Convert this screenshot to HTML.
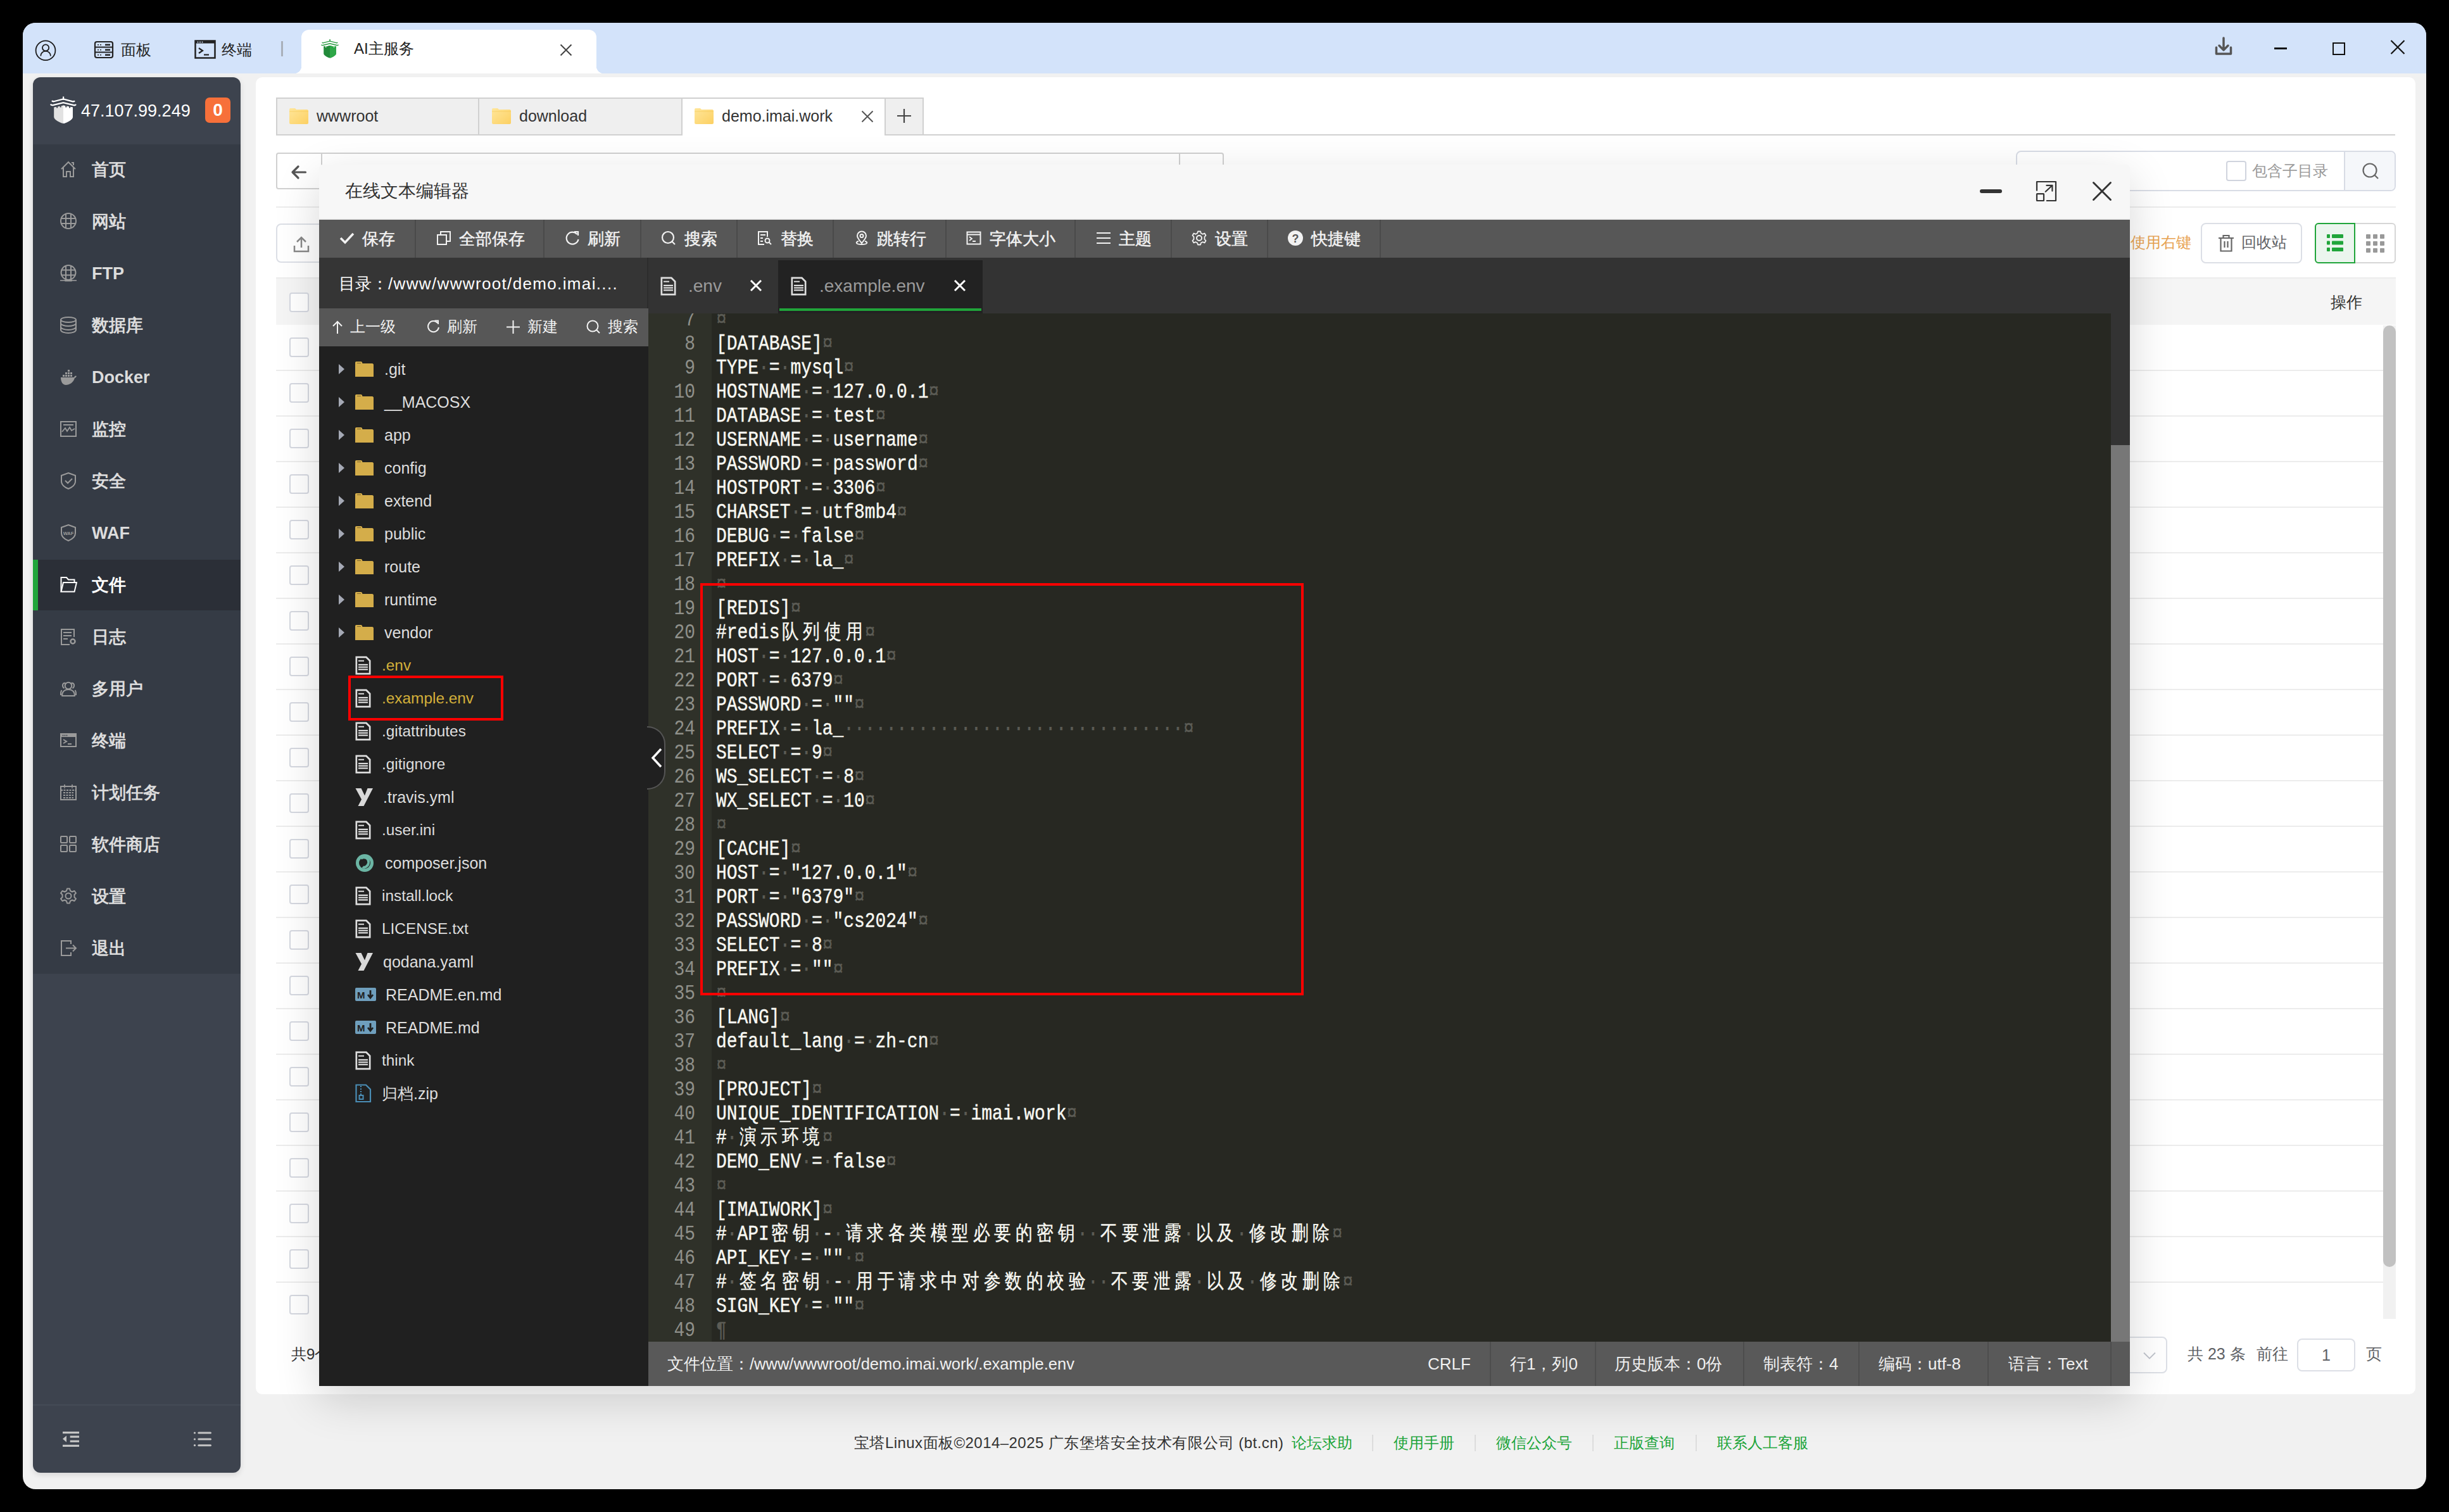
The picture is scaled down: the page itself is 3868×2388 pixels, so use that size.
<!DOCTYPE html>
<html><head><meta charset="utf-8"><title>editor</title>
<style>
html,body{margin:0;padding:0;width:3868px;height:2388px;overflow:hidden;background:#000;}
body{position:relative;font-family:"Liberation Sans",sans-serif;}
div,svg{box-sizing:border-box;}
</style></head><body>
<div style="position:absolute;left:36px;top:36px;width:3796px;height:2316px;background:#f1f1f1;border-radius:20px;overflow:hidden;"></div>
<div style="position:absolute;left:36px;top:36px;width:3796px;height:80px;background:#d3e3fa;border-radius:20px 20px 0 0;"></div>
<div style="position:absolute;left:52px;top:122px;width:328px;height:2204px;background:#3d434e;border-radius:12px;box-shadow:0 3px 10px rgba(0,0,0,0.12);"></div>
<div style="position:absolute;left:52px;top:228px;width:328px;height:1310px;background:#353b45;"></div>
<div style="position:absolute;left:52px;top:2218px;width:328px;height:2px;background:#444b56;"></div>
<div style="position:absolute;left:52px;top:884px;width:328px;height:80px;background:#2b2f37;"></div>
<div style="position:absolute;left:52px;top:884px;width:8px;height:80px;background:#20a53a;"></div>
<div style="position:absolute;left:404px;top:122px;width:3411px;height:2080px;background:#fff;border-radius:10px;"></div>
<svg style="position:absolute;left:54px;top:62px;" width="36" height="36" viewBox="0 0 36 36"><circle cx="18" cy="17.8" r="15.4" fill="none" stroke="#1a1a1a" stroke-width="1.8"/><circle cx="18.1" cy="13.4" r="5.1" fill="none" stroke="#1a1a1a" stroke-width="1.8"/><path d="M10.3 26.5 A7.8 7.8 0 0 1 25.9 26.5" fill="none" stroke="#1a1a1a" stroke-width="1.8"/></svg>
<svg style="position:absolute;left:148px;top:64px;" width="32" height="30" viewBox="0 0 32 30"><rect x="2" y="2" width="28" height="25" rx="3" fill="none" stroke="#222" stroke-width="2.2"/><line x1="2" y1="10.5" x2="30" y2="10.5" stroke="#222" stroke-width="2"/><line x1="2" y1="18.5" x2="30" y2="18.5" stroke="#222" stroke-width="2"/><g fill="#222"><rect x="6" y="6" width="2" height="1.5"/><rect x="10" y="6" width="2" height="1.5"/><rect x="6" y="14" width="2" height="1.5"/><rect x="10" y="14" width="2" height="1.5"/><rect x="6" y="22" width="2" height="1.5"/><rect x="10" y="22" width="2" height="1.5"/><rect x="18" y="5.5" width="8" height="2.5"/><rect x="18" y="13.5" width="8" height="2.5"/><rect x="18" y="21.5" width="8" height="2.5"/></g></svg>
<div style="position:absolute;left:191px;top:55.0px;height:48px;line-height:48px;font-family:'Liberation Sans',sans-serif;font-size:24px;color:#222;font-weight:400;white-space:pre;">面板</div>
<svg style="position:absolute;left:306px;top:62px;" width="36" height="32" viewBox="0 0 36 32"><rect x="2.5" y="2.5" width="31" height="27" fill="none" stroke="#222" stroke-width="2.5"/><rect x="2.5" y="2.5" width="31" height="4" fill="#222"/><g fill="#d3e3fa"><circle cx="6.5" cy="4.5" r="1"/><circle cx="10" cy="4.5" r="1"/><circle cx="13.5" cy="4.5" r="1"/></g><path d="M8 14 L14 18 L8 22" fill="none" stroke="#222" stroke-width="2.2"/><line x1="16" y1="24.5" x2="24" y2="24.5" stroke="#222" stroke-width="2.2"/></svg>
<div style="position:absolute;left:350px;top:55.0px;height:48px;line-height:48px;font-family:'Liberation Sans',sans-serif;font-size:24px;color:#222;font-weight:400;white-space:pre;">终端</div>
<div style="position:absolute;left:444px;top:65px;width:3px;height:24px;background:#a9b0ba;"></div>
<div style="position:absolute;left:476px;top:47px;width:466px;height:69px;background:#fff;border-radius:12px 12px 0 0;"></div>
<div style="position:absolute;left:464px;top:104px;width:12px;height:12px;background:radial-gradient(circle at 0 0, transparent 12px, #fff 12.5px);"></div>
<div style="position:absolute;left:942px;top:104px;width:12px;height:12px;background:radial-gradient(circle at 100% 0, transparent 12px, #fff 12.5px);"></div>
<svg style="position:absolute;left:506px;top:60px;" width="30" height="33" viewBox="0 0 30 33"><path d="M5.2 13 H8 V15 H9.3 V13 H12.5 V12 H17.5 V13 H21 V15 H22 V13 H24.9 V24.4 C24.9 27.5 19 30.5 15 31.6 C11 30.5 5.2 27.5 5.2 24.4 Z" fill="#228a3a"/><path d="M15 12 H17.5 V13 H21 V15 H22 V13 H24.9 V24.4 C24.9 27.5 19 30.5 15 31.6 Z" fill="#2ea748"/><path d="M2.8 6.8 C3.5 7.9 4.2 8 5 7.7 L15 4.9 L25 7.7 C25.8 8 26.5 7.9 27.2 6.8" fill="none" stroke="#2a9a42" stroke-width="1.4"/><path d="M1.5 10.6 C2.2 11.7 3 11.8 4 11.5 L15 8.7 L26 11.5 C27 11.8 27.8 11.7 28.5 10.6" fill="none" stroke="#2a9a42" stroke-width="1.4"/><rect x="14.3" y="2" width="1.5" height="3.5" fill="#2a9a42"/></svg>
<div style="position:absolute;left:559px;top:53.0px;height:48px;line-height:48px;font-family:'Liberation Sans',sans-serif;font-size:24px;color:#222;font-weight:400;white-space:pre;">AI主服务</div>
<svg style="position:absolute;left:884px;top:69px;" width="20" height="20" viewBox="0 0 20 20"><path d="M1.5 1.5 L18.5 18.5 M18.5 1.5 L1.5 18.5" stroke="#444" stroke-width="2"/></svg>
<svg style="position:absolute;left:3496px;top:57px;" width="32" height="32" viewBox="0 0 32 32"><path d="M16 3 L16 22 M9 15 L16 22 L23 15" fill="none" stroke="#555" stroke-width="3.5" stroke-linecap="round" stroke-linejoin="round"/><path d="M4.5 18 L4.5 28 L27.5 28 L27.5 18" fill="none" stroke="#555" stroke-width="3.5" stroke-linecap="round" stroke-linejoin="round"/></svg>
<div style="position:absolute;left:3592px;top:75px;width:20px;height:3px;background:#111;"></div>
<div style="position:absolute;left:3684px;top:67px;width:20px;height:20px;border:2.5px solid #111;"></div>
<svg style="position:absolute;left:3774px;top:62px;" width="26" height="25" viewBox="0 0 26 25"><path d="M2.5 2 L23.5 23 M23.5 2 L2.5 23" stroke="#111" stroke-width="2.2"/></svg>
<svg style="position:absolute;left:78px;top:150px;" width="44" height="48" viewBox="0 0 44 48"><path d="M7.2 19.5 L22 16.5 L36.9 19.5 L36.9 34.4 C36.9 39 28 43.5 22 45 C16 43.5 7.2 39 7.2 34.4 Z" fill="#e2e2e2"/><path d="M22 16.5 L36.9 19.5 L36.9 34.4 C36.9 39 28 43.5 22 45 Z" fill="#ffffff"/><g fill="#3d434e"><rect x="11.2" y="17" width="2" height="3.5"/><rect x="16.7" y="16" width="2" height="3.5"/><rect x="25.3" y="16" width="2" height="3.5"/><rect x="31.1" y="17" width="2" height="3.5"/></g><path d="M4 9 C5 10.5 6 10.6 8 10 L22 6.5 L36 10.2 C38 10.8 39 10.5 40 9.2" fill="none" stroke="#fff" stroke-width="2.3"/><path d="M1.8 14.6 C3 16.3 4.5 16.5 6.5 15.8 L22 12.2 L37.5 15.9 C39.5 16.6 41 16.3 42 14.8" fill="none" stroke="#fff" stroke-width="2.3"/><rect x="21" y="2.5" width="2.2" height="5.5" fill="#fff"/></svg>
<div style="position:absolute;left:128px;top:148.0px;height:54px;line-height:54px;font-family:'Liberation Sans',sans-serif;font-size:27px;color:#fff;font-weight:400;white-space:pre;">47.107.99.249</div>
<div style="position:absolute;left:324px;top:154px;width:40px;height:40px;background:#f7703a;border-radius:7px;"></div>
<div style="position:absolute;left:324px;top:154px;width:40px;height:40px;line-height:40px;text-align:center;font-family:'Liberation Sans',sans-serif;font-size:28px;font-weight:700;color:#fff;">0</div>
<svg style="position:absolute;left:95px;top:254px;" width="27" height="28" viewBox="0 0 27 28"><path d="M2 13 L13 2 L24 13 M5 10 L5 25 L10 25 L10 17 L16 17 L16 25 L21 25 L21 10" fill="none" stroke="#9a9a9a" stroke-width="2"/><path d="M18 3 L21 3 L21 7" fill="none" stroke="#9a9a9a" stroke-width="2"/></svg>
<div style="position:absolute;left:145px;top:241.0px;height:54px;line-height:54px;font-family:'Liberation Sans',sans-serif;font-size:27px;color:#dcdcdc;font-weight:700;white-space:pre;">首页</div>
<svg style="position:absolute;left:95px;top:336px;" width="27" height="28" viewBox="0 0 27 28"><circle cx="13" cy="13" r="12" fill="none" stroke="#9a9a9a" stroke-width="2"/><path d="M1 9 H25 M1 17 H25 M9 1.5 V24.5 M17 1.5 V24.5" stroke="#9a9a9a" stroke-width="2"/></svg>
<div style="position:absolute;left:145px;top:323.0px;height:54px;line-height:54px;font-family:'Liberation Sans',sans-serif;font-size:27px;color:#dcdcdc;font-weight:700;white-space:pre;">网站</div>
<svg style="position:absolute;left:95px;top:418px;" width="27" height="28" viewBox="0 0 27 28"><defs><clipPath id="ftpc"><circle cx="13" cy="12.5" r="11.5"/></clipPath></defs><circle cx="13" cy="12.5" r="11.5" fill="none" stroke="#9a9a9a" stroke-width="2"/><path d="M0 8.5 H26 M0 16.5 H26 M9 0 V26 M17 0 V26" stroke="#9a9a9a" stroke-width="2" clip-path="url(#ftpc)"/><path d="M0 25 H26" stroke="#9a9a9a" stroke-width="1.6"/><rect x="7" y="23.8" width="12" height="2.6" rx="1" fill="#9a9a9a"/></svg>
<div style="position:absolute;left:145px;top:405.0px;height:54px;line-height:54px;font-family:'Liberation Sans',sans-serif;font-size:27px;color:#dcdcdc;font-weight:700;white-space:pre;">FTP</div>
<svg style="position:absolute;left:95px;top:500px;" width="27" height="28" viewBox="0 0 27 28"><ellipse cx="13" cy="5" rx="12" ry="4" fill="none" stroke="#9a9a9a" stroke-width="2"/><path d="M1 5 V21 C1 24 7 26 13 26 C19 26 25 24 25 21 V5 M1 10.5 C1 13 7 15 13 15 C19 15 25 13 25 10.5 M1 16 C1 19 7 21 13 21 C19 21 25 19 25 16" fill="none" stroke="#9a9a9a" stroke-width="2"/></svg>
<div style="position:absolute;left:145px;top:487.0px;height:54px;line-height:54px;font-family:'Liberation Sans',sans-serif;font-size:27px;color:#dcdcdc;font-weight:700;white-space:pre;">数据库</div>
<svg style="position:absolute;left:95px;top:582px;" width="27" height="28" viewBox="0 0 27 28"><path d="M1 14 H22 C23 11 25 11 26 12 C25 14 24 15 23 15 C21 22 15 26 9 26 C4 26 1 21 1 14 Z" fill="#9a9a9a"/><g fill="#9a9a9a"><rect x="4" y="10" width="3" height="3"/><rect x="8" y="10" width="3" height="3"/><rect x="12" y="10" width="3" height="3"/><rect x="16" y="10" width="3" height="3"/><rect x="8" y="6" width="3" height="3"/><rect x="12" y="6" width="3" height="3"/><rect x="16" y="6" width="3" height="3"/><rect x="12" y="2" width="3" height="3"/></g></svg>
<div style="position:absolute;left:145px;top:569.0px;height:54px;line-height:54px;font-family:'Liberation Sans',sans-serif;font-size:27px;color:#dcdcdc;font-weight:700;white-space:pre;">Docker</div>
<svg style="position:absolute;left:95px;top:664px;" width="27" height="28" viewBox="0 0 27 28"><rect x="1" y="2" width="24" height="23" fill="none" stroke="#9a9a9a" stroke-width="2"/><path d="M5 7 H21 M3 18 L8 12 L11 17 L15 11 L18 16 L23 13" fill="none" stroke="#9a9a9a" stroke-width="1.8"/></svg>
<div style="position:absolute;left:145px;top:651.0px;height:54px;line-height:54px;font-family:'Liberation Sans',sans-serif;font-size:27px;color:#dcdcdc;font-weight:700;white-space:pre;">监控</div>
<svg style="position:absolute;left:95px;top:746px;" width="27" height="28" viewBox="0 0 27 28"><path d="M13 1 L24 5 V14 C24 20 18 24 13 26 C8 24 2 20 2 14 V5 Z" fill="none" stroke="#9a9a9a" stroke-width="2"/><path d="M8 13 L12 17 L19 10" fill="none" stroke="#9a9a9a" stroke-width="2"/></svg>
<div style="position:absolute;left:145px;top:733.0px;height:54px;line-height:54px;font-family:'Liberation Sans',sans-serif;font-size:27px;color:#dcdcdc;font-weight:700;white-space:pre;">安全</div>
<svg style="position:absolute;left:95px;top:828px;" width="27" height="28" viewBox="0 0 27 28"><path d="M13 1 L24 5 V14 C24 20 18 24 13 26 C8 24 2 20 2 14 V5 Z" fill="none" stroke="#9a9a9a" stroke-width="2"/><text x="13" y="16.5" font-size="7.5" font-family="Liberation Sans" font-weight="700" fill="#9a9a9a" text-anchor="middle">WAF</text></svg>
<div style="position:absolute;left:145px;top:815.0px;height:54px;line-height:54px;font-family:'Liberation Sans',sans-serif;font-size:27px;color:#dcdcdc;font-weight:700;white-space:pre;">WAF</div>
<svg style="position:absolute;left:95px;top:910px;" width="27" height="28" viewBox="0 0 27 28"><path d="M1.5 24.5 V2 H10 L13 5.5 H22.5 V9" fill="none" stroke="#fff" stroke-width="2"/><path d="M1.5 24.5 L5 10 H26 L22.5 24.5 Z" fill="none" stroke="#fff" stroke-width="2"/></svg>
<div style="position:absolute;left:145px;top:897.0px;height:54px;line-height:54px;font-family:'Liberation Sans',sans-serif;font-size:27px;color:#ffffff;font-weight:700;white-space:pre;">文件</div>
<svg style="position:absolute;left:95px;top:992px;" width="27" height="28" viewBox="0 0 27 28"><path d="M22 14 V2 H2 V26 H15" fill="none" stroke="#9a9a9a" stroke-width="2"/><path d="M5 7 H18 M5 12 H18 M5 17 H12" stroke="#9a9a9a" stroke-width="2"/><circle cx="20" cy="21" r="3.5" fill="none" stroke="#9a9a9a" stroke-width="2.5"/></svg>
<div style="position:absolute;left:145px;top:979.0px;height:54px;line-height:54px;font-family:'Liberation Sans',sans-serif;font-size:27px;color:#dcdcdc;font-weight:700;white-space:pre;">日志</div>
<svg style="position:absolute;left:95px;top:1074px;" width="27" height="28" viewBox="0 0 27 28"><circle cx="13" cy="9" r="5.3" fill="none" stroke="#9a9a9a" stroke-width="2"/><path d="M3 25 C3 17.5 8 15 13 15 C18 15 23 17.5 23 25 Z" fill="none" stroke="#9a9a9a" stroke-width="2" stroke-linejoin="round"/><path d="M8.5 5 C6 4 3.5 6 4 9.5 C4.3 11.5 5.5 12.5 6.5 13 M2.5 16 C1 18 0.8 21 1 24" fill="none" stroke="#9a9a9a" stroke-width="2"/><path d="M17.5 5 C20 4 22.5 6 22 9.5 C21.7 11.5 20.5 12.5 19.5 13 M23.5 16 C25 18 25.2 21 25 24" fill="none" stroke="#9a9a9a" stroke-width="2"/></svg>
<div style="position:absolute;left:145px;top:1061.0px;height:54px;line-height:54px;font-family:'Liberation Sans',sans-serif;font-size:27px;color:#dcdcdc;font-weight:700;white-space:pre;">多用户</div>
<svg style="position:absolute;left:95px;top:1156px;" width="27" height="28" viewBox="0 0 27 28"><rect x="1" y="3" width="24" height="20" fill="none" stroke="#9a9a9a" stroke-width="2"/><rect x="1" y="3" width="24" height="5" fill="#9a9a9a"/><g fill="#353b45"><circle cx="4.5" cy="5.5" r="0.9"/><circle cx="7.5" cy="5.5" r="0.9"/><circle cx="10.5" cy="5.5" r="0.9"/></g><path d="M5 12 L10 15 L5 18 M12 19 H18" fill="none" stroke="#9a9a9a" stroke-width="2"/></svg>
<div style="position:absolute;left:145px;top:1143.0px;height:54px;line-height:54px;font-family:'Liberation Sans',sans-serif;font-size:27px;color:#dcdcdc;font-weight:700;white-space:pre;">终端</div>
<svg style="position:absolute;left:95px;top:1238px;" width="27" height="28" viewBox="0 0 27 28"><rect x="1" y="4" width="24" height="21" fill="none" stroke="#9a9a9a" stroke-width="2"/><path d="M7 1 V7 M19 1 V7 M1 10 H25 M5 14 H21 M5 18 H21 M5 22 H21" stroke="#9a9a9a" stroke-width="1.8" stroke-dasharray="3 1.5"/></svg>
<div style="position:absolute;left:145px;top:1225.0px;height:54px;line-height:54px;font-family:'Liberation Sans',sans-serif;font-size:27px;color:#dcdcdc;font-weight:700;white-space:pre;">计划任务</div>
<svg style="position:absolute;left:95px;top:1320px;" width="27" height="28" viewBox="0 0 27 28"><rect x="1" y="1" width="10" height="10" rx="1" fill="none" stroke="#9a9a9a" stroke-width="2"/><rect x="15" y="1" width="10" height="10" rx="1" fill="none" stroke="#9a9a9a" stroke-width="2"/><rect x="1" y="15" width="10" height="10" rx="1" fill="none" stroke="#9a9a9a" stroke-width="2"/><rect x="15" y="15" width="10" height="10" rx="1" fill="none" stroke="#9a9a9a" stroke-width="2"/></svg>
<div style="position:absolute;left:145px;top:1307.0px;height:54px;line-height:54px;font-family:'Liberation Sans',sans-serif;font-size:27px;color:#dcdcdc;font-weight:700;white-space:pre;">软件商店</div>
<svg style="position:absolute;left:95px;top:1402px;" width="27" height="28" viewBox="0 0 27 28"><circle cx="13" cy="13" r="4.5" fill="none" stroke="#9a9a9a" stroke-width="2"/><path d="M11 1.5 H15 L16 5 L19 6.5 L22.5 5 L25 8.5 L22.5 11 V15 L25 17.5 L22.5 21 L19 19.5 L16 21 L15 24.5 H11 L10 21 L7 19.5 L3.5 21 L1 17.5 L3.5 15 V11 L1 8.5 L3.5 5 L7 6.5 L10 5 Z" fill="none" stroke="#9a9a9a" stroke-width="2" stroke-linejoin="round"/></svg>
<div style="position:absolute;left:145px;top:1389.0px;height:54px;line-height:54px;font-family:'Liberation Sans',sans-serif;font-size:27px;color:#dcdcdc;font-weight:700;white-space:pre;">设置</div>
<svg style="position:absolute;left:95px;top:1484px;" width="27" height="28" viewBox="0 0 27 28"><path d="M17 7 V2 H2 V25 H17 V20" fill="none" stroke="#9a9a9a" stroke-width="2"/><path d="M9 13.5 H25 M20 8.5 L25 13.5 L20 18.5" fill="none" stroke="#9a9a9a" stroke-width="2"/></svg>
<div style="position:absolute;left:145px;top:1471.0px;height:54px;line-height:54px;font-family:'Liberation Sans',sans-serif;font-size:27px;color:#dcdcdc;font-weight:700;white-space:pre;">退出</div>
<svg style="position:absolute;left:98px;top:2258px;" width="30" height="30" viewBox="0 0 30 30"><g fill="#c4c4c4"><rect x="1" y="3" width="26" height="3.2"/><rect x="12.7" y="9.5" width="14.3" height="3.2"/><rect x="12.7" y="16.7" width="14.3" height="3.2"/><rect x="1" y="23.8" width="26" height="3.2"/><path d="M7 9.5 L1 14.5 L7 19.8 Z"/></g></svg>
<svg style="position:absolute;left:304px;top:2258px;" width="32" height="30" viewBox="0 0 32 30"><g fill="#c4c4c4"><circle cx="3.5" cy="5" r="1.6"/><circle cx="3.5" cy="15" r="1.6"/><circle cx="3.5" cy="24.7" r="1.6"/></g><path d="M9.8 5 H28.5 M9.8 15 H28.5 M9.8 24.7 H28.5" stroke="#c4c4c4" stroke-width="3" stroke-linecap="round"/></svg>
<div style="position:absolute;left:436px;top:154px;width:321px;height:60px;background:#efefef;border:2px solid #d0d0d0;"></div>
<div style="position:absolute;left:755px;top:154px;width:323px;height:60px;background:#efefef;border:2px solid #d0d0d0;"></div>
<div style="position:absolute;left:1076px;top:154px;width:323px;height:60px;background:#fff;border:2px solid #d0d0d0;border-bottom:none;"></div>
<div style="position:absolute;left:1397px;top:154px;width:62px;height:60px;background:#efefef;border:2px solid #d0d0d0;"></div>
<div style="position:absolute;left:1459px;top:212px;width:2324px;height:2px;background:#d0d0d0;"></div>
<svg style="position:absolute;left:456px;top:170px;" width="32" height="27" viewBox="0 0 32 27"><defs><linearGradient id="fg1" x1="0" y1="0" x2="1" y2="1"><stop offset="0" stop-color="#ffe69a"/><stop offset="1" stop-color="#fcd062"/></linearGradient></defs><path d="M1 3 C1 1.5 2 1 3 1 H10 L12 3 H29 C30 3 31 4 31 5 V24 C31 25 30 26 29 26 H3 C2 26 1 25 1 24 Z" fill="url(#fg1)"/><path d="M1 6 H31" stroke="#f5c445" stroke-width="0.8" opacity="0.6"/></svg>
<div style="position:absolute;left:500px;top:158.0px;height:50px;line-height:50px;font-family:'Liberation Sans',sans-serif;font-size:25px;color:#333;font-weight:400;white-space:pre;">wwwroot</div>
<svg style="position:absolute;left:776px;top:170px;" width="32" height="27" viewBox="0 0 32 27"><defs><linearGradient id="fg2" x1="0" y1="0" x2="1" y2="1"><stop offset="0" stop-color="#ffe69a"/><stop offset="1" stop-color="#fcd062"/></linearGradient></defs><path d="M1 3 C1 1.5 2 1 3 1 H10 L12 3 H29 C30 3 31 4 31 5 V24 C31 25 30 26 29 26 H3 C2 26 1 25 1 24 Z" fill="url(#fg2)"/><path d="M1 6 H31" stroke="#f5c445" stroke-width="0.8" opacity="0.6"/></svg>
<div style="position:absolute;left:820px;top:158.0px;height:50px;line-height:50px;font-family:'Liberation Sans',sans-serif;font-size:25px;color:#333;font-weight:400;white-space:pre;">download</div>
<svg style="position:absolute;left:1096px;top:170px;" width="32" height="27" viewBox="0 0 32 27"><defs><linearGradient id="fg3" x1="0" y1="0" x2="1" y2="1"><stop offset="0" stop-color="#ffe69a"/><stop offset="1" stop-color="#fcd062"/></linearGradient></defs><path d="M1 3 C1 1.5 2 1 3 1 H10 L12 3 H29 C30 3 31 4 31 5 V24 C31 25 30 26 29 26 H3 C2 26 1 25 1 24 Z" fill="url(#fg3)"/><path d="M1 6 H31" stroke="#f5c445" stroke-width="0.8" opacity="0.6"/></svg>
<div style="position:absolute;left:1140px;top:158.0px;height:50px;line-height:50px;font-family:'Liberation Sans',sans-serif;font-size:25px;color:#333;font-weight:400;white-space:pre;">demo.imai.work</div>
<svg style="position:absolute;left:1360px;top:174px;" width="20" height="20" viewBox="0 0 20 20"><path d="M1.5 1.5 L18.5 18.5 M18.5 1.5 L1.5 18.5" stroke="#555" stroke-width="2"/></svg>
<svg style="position:absolute;left:1416px;top:171px;" width="24" height="24" viewBox="0 0 24 24"><path d="M12 1 V23 M1 12 H23" stroke="#444" stroke-width="2.2"/></svg>
<div style="position:absolute;left:436px;top:241px;width:1497px;height:58px;border:2px solid #d0d0d0;border-radius:4px;background:#fff;"></div>
<div style="position:absolute;left:507px;top:241px;width:2px;height:58px;background:#d0d0d0;"></div>
<div style="position:absolute;left:1862px;top:241px;width:2px;height:58px;background:#d0d0d0;"></div>
<svg style="position:absolute;left:455px;top:258px;" width="32" height="28" viewBox="0 0 32 28"><path d="M27.5 14 H7 M16 5 L7 14 L16 23" fill="none" stroke="#555" stroke-width="3.2" stroke-linecap="round" stroke-linejoin="round"/></svg>
<div style="position:absolute;left:3184px;top:238px;width:600px;height:64px;border:2px solid #d8dce5;border-radius:8px;background:#fff;"></div>
<div style="position:absolute;left:3702px;top:240px;width:80px;height:60px;background:#f5f7fa;border-left:2px solid #d8dce5;border-radius:0 6px 6px 0;"></div>
<div style="position:absolute;left:3516px;top:254px;width:32px;height:32px;border:2px solid #d0d4de;border-radius:4px;background:#fff;"></div>
<div style="position:absolute;left:3557px;top:246.0px;height:48px;line-height:48px;font-family:'Liberation Sans',sans-serif;font-size:24px;color:#999;font-weight:400;white-space:pre;">包含子目录</div>
<svg style="position:absolute;left:3730px;top:256px;" width="30" height="30" viewBox="0 0 30 30"><circle cx="13" cy="13" r="10.5" fill="none" stroke="#666" stroke-width="2.2"/><path d="M20.5 20.5 L26 26" stroke="#666" stroke-width="2.2"/></svg>
<div style="position:absolute;left:436px;top:326px;width:3348px;height:2px;background:#ececec;"></div>
<div style="position:absolute;left:436px;top:353px;width:264px;height:62px;border:2px solid #dcdfe6;border-radius:8px;background:#fff;"></div>
<svg style="position:absolute;left:462px;top:372px;" width="28" height="28" viewBox="0 0 28 28"><path d="M14 3 V19 M7 10 L14 3 L21 10" fill="none" stroke="#888" stroke-width="2.5"/><path d="M3 16 V25 H25 V16" fill="none" stroke="#888" stroke-width="2.5"/></svg>
<div style="position:absolute;left:3365px;top:359.0px;height:48px;line-height:48px;font-family:'Liberation Sans',sans-serif;font-size:24px;color:#e8a352;font-weight:400;white-space:pre;">使用右键</div>
<div style="position:absolute;left:3476px;top:352px;width:160px;height:64px;border:2px solid #dcdfe6;border-radius:8px;background:#fff;"></div>
<svg style="position:absolute;left:3503px;top:370px;" width="26" height="28" viewBox="0 0 26 28"><path d="M1 6 H25 M8.5 6 V2 H17.5 V6 M4.5 6 V26.5 H21.5 V6 M10.5 11 V21 M15.5 11 V21" fill="none" stroke="#666" stroke-width="2.2"/></svg>
<div style="position:absolute;left:3540px;top:359.0px;height:48px;line-height:48px;font-family:'Liberation Sans',sans-serif;font-size:24px;color:#606266;font-weight:400;white-space:pre;">回收站</div>
<div style="position:absolute;left:3656px;top:352px;width:128px;height:64px;border:2px solid #d6d6d6;border-radius:6px;background:#fff;"></div>
<div style="position:absolute;left:3656px;top:352px;width:64px;height:64px;border:2.5px solid #20a53a;border-radius:6px 0 0 6px;background:#ebf5ee;"></div>
<svg style="position:absolute;left:3675px;top:370px;" width="26" height="27" viewBox="0 0 26 27"><g fill="#20a53a"><rect x="0" y="0" width="5" height="6" rx="1"/><rect x="8" y="0" width="18" height="6" rx="1"/><rect x="0" y="10.5" width="5" height="6" rx="1"/><rect x="8" y="10.5" width="18" height="6" rx="1"/><rect x="0" y="21" width="5" height="6" rx="1"/><rect x="8" y="21" width="18" height="6" rx="1"/></g></svg>
<svg style="position:absolute;left:3737px;top:370px;" width="29" height="29" viewBox="0 0 29 29"><g fill="#999"><rect x="0" y="0" width="7" height="7" rx="1"/><rect x="0" y="11" width="7" height="7" rx="1"/><rect x="0" y="22" width="7" height="7" rx="1"/><rect x="11" y="0" width="7" height="7" rx="1"/><rect x="11" y="11" width="7" height="7" rx="1"/><rect x="11" y="22" width="7" height="7" rx="1"/><rect x="22" y="0" width="7" height="7" rx="1"/><rect x="22" y="11" width="7" height="7" rx="1"/><rect x="22" y="22" width="7" height="7" rx="1"/></g></svg>
<div style="position:absolute;left:436px;top:440px;width:3348px;height:73px;background:#f5f5f5;"></div>
<div style="position:absolute;left:436px;top:438px;width:3348px;height:2px;background:#ececec;"></div>
<div style="position:absolute;left:457px;top:462px;width:31px;height:31px;border:2px solid #d5d8e0;border-radius:4px;background:#fff;"></div>
<div style="position:absolute;left:3681px;top:452.0px;height:50px;line-height:50px;font-family:'Liberation Sans',sans-serif;font-size:25px;color:#333;font-weight:400;white-space:pre;">操作</div>
<div style="position:absolute;left:436px;top:584px;width:3328px;height:2px;background:#ececec;"></div>
<div style="position:absolute;left:436px;top:656px;width:3328px;height:2px;background:#ececec;"></div>
<div style="position:absolute;left:436px;top:728px;width:3328px;height:2px;background:#ececec;"></div>
<div style="position:absolute;left:436px;top:800px;width:3328px;height:2px;background:#ececec;"></div>
<div style="position:absolute;left:436px;top:872px;width:3328px;height:2px;background:#ececec;"></div>
<div style="position:absolute;left:436px;top:944px;width:3328px;height:2px;background:#ececec;"></div>
<div style="position:absolute;left:436px;top:1016px;width:3328px;height:2px;background:#ececec;"></div>
<div style="position:absolute;left:436px;top:1088px;width:3328px;height:2px;background:#ececec;"></div>
<div style="position:absolute;left:436px;top:1160px;width:3328px;height:2px;background:#ececec;"></div>
<div style="position:absolute;left:436px;top:1232px;width:3328px;height:2px;background:#ececec;"></div>
<div style="position:absolute;left:436px;top:1304px;width:3328px;height:2px;background:#ececec;"></div>
<div style="position:absolute;left:436px;top:1376px;width:3328px;height:2px;background:#ececec;"></div>
<div style="position:absolute;left:436px;top:1448px;width:3328px;height:2px;background:#ececec;"></div>
<div style="position:absolute;left:436px;top:1520px;width:3328px;height:2px;background:#ececec;"></div>
<div style="position:absolute;left:436px;top:1592px;width:3328px;height:2px;background:#ececec;"></div>
<div style="position:absolute;left:436px;top:1664px;width:3328px;height:2px;background:#ececec;"></div>
<div style="position:absolute;left:436px;top:1736px;width:3328px;height:2px;background:#ececec;"></div>
<div style="position:absolute;left:436px;top:1808px;width:3328px;height:2px;background:#ececec;"></div>
<div style="position:absolute;left:436px;top:1880px;width:3328px;height:2px;background:#ececec;"></div>
<div style="position:absolute;left:436px;top:1952px;width:3328px;height:2px;background:#ececec;"></div>
<div style="position:absolute;left:436px;top:2024px;width:3328px;height:2px;background:#ececec;"></div>
<div style="position:absolute;left:457px;top:533px;width:31px;height:31px;border:2px solid #d5d8e0;border-radius:4px;background:#fff;"></div>
<div style="position:absolute;left:457px;top:605px;width:31px;height:31px;border:2px solid #d5d8e0;border-radius:4px;background:#fff;"></div>
<div style="position:absolute;left:457px;top:677px;width:31px;height:31px;border:2px solid #d5d8e0;border-radius:4px;background:#fff;"></div>
<div style="position:absolute;left:457px;top:749px;width:31px;height:31px;border:2px solid #d5d8e0;border-radius:4px;background:#fff;"></div>
<div style="position:absolute;left:457px;top:821px;width:31px;height:31px;border:2px solid #d5d8e0;border-radius:4px;background:#fff;"></div>
<div style="position:absolute;left:457px;top:893px;width:31px;height:31px;border:2px solid #d5d8e0;border-radius:4px;background:#fff;"></div>
<div style="position:absolute;left:457px;top:965px;width:31px;height:31px;border:2px solid #d5d8e0;border-radius:4px;background:#fff;"></div>
<div style="position:absolute;left:457px;top:1037px;width:31px;height:31px;border:2px solid #d5d8e0;border-radius:4px;background:#fff;"></div>
<div style="position:absolute;left:457px;top:1109px;width:31px;height:31px;border:2px solid #d5d8e0;border-radius:4px;background:#fff;"></div>
<div style="position:absolute;left:457px;top:1181px;width:31px;height:31px;border:2px solid #d5d8e0;border-radius:4px;background:#fff;"></div>
<div style="position:absolute;left:457px;top:1253px;width:31px;height:31px;border:2px solid #d5d8e0;border-radius:4px;background:#fff;"></div>
<div style="position:absolute;left:457px;top:1325px;width:31px;height:31px;border:2px solid #d5d8e0;border-radius:4px;background:#fff;"></div>
<div style="position:absolute;left:457px;top:1397px;width:31px;height:31px;border:2px solid #d5d8e0;border-radius:4px;background:#fff;"></div>
<div style="position:absolute;left:457px;top:1469px;width:31px;height:31px;border:2px solid #d5d8e0;border-radius:4px;background:#fff;"></div>
<div style="position:absolute;left:457px;top:1541px;width:31px;height:31px;border:2px solid #d5d8e0;border-radius:4px;background:#fff;"></div>
<div style="position:absolute;left:457px;top:1613px;width:31px;height:31px;border:2px solid #d5d8e0;border-radius:4px;background:#fff;"></div>
<div style="position:absolute;left:457px;top:1685px;width:31px;height:31px;border:2px solid #d5d8e0;border-radius:4px;background:#fff;"></div>
<div style="position:absolute;left:457px;top:1757px;width:31px;height:31px;border:2px solid #d5d8e0;border-radius:4px;background:#fff;"></div>
<div style="position:absolute;left:457px;top:1829px;width:31px;height:31px;border:2px solid #d5d8e0;border-radius:4px;background:#fff;"></div>
<div style="position:absolute;left:457px;top:1901px;width:31px;height:31px;border:2px solid #d5d8e0;border-radius:4px;background:#fff;"></div>
<div style="position:absolute;left:457px;top:1973px;width:31px;height:31px;border:2px solid #d5d8e0;border-radius:4px;background:#fff;"></div>
<div style="position:absolute;left:457px;top:2045px;width:31px;height:31px;border:2px solid #d5d8e0;border-radius:4px;background:#fff;"></div>
<div style="position:absolute;left:3764px;top:514px;width:20px;height:1569px;background:#f1f1f1;"></div>
<div style="position:absolute;left:3764px;top:514px;width:20px;height:1487px;background:#c1c1c1;border-radius:10px;"></div>
<div style="position:absolute;left:460px;top:2115.0px;height:48px;line-height:48px;font-family:'Liberation Sans',sans-serif;font-size:24px;color:#333;font-weight:400;white-space:pre;">共9个目录，14个文件</div>
<div style="position:absolute;left:3300px;top:2111px;width:123px;height:58px;border:2px solid #dcdfe6;border-radius:8px;background:#fff;"></div>
<svg style="position:absolute;left:3385px;top:2135px;" width="20" height="12" viewBox="0 0 20 12"><path d="M1 1.5 L10 10.5 L19 1.5" fill="none" stroke="#c0c4cc" stroke-width="1.8"/></svg>
<div style="position:absolute;left:3455px;top:2113.0px;height:50px;line-height:50px;font-family:'Liberation Sans',sans-serif;font-size:25px;color:#606266;font-weight:400;white-space:pre;">共 23 条</div>
<div style="position:absolute;left:3564px;top:2113.0px;height:50px;line-height:50px;font-family:'Liberation Sans',sans-serif;font-size:25px;color:#606266;font-weight:400;white-space:pre;">前往</div>
<div style="position:absolute;left:3628px;top:2114px;width:92px;height:52px;border:2px solid #dcdfe6;border-radius:8px;background:#fff;"></div>
<div style="position:absolute;left:3628px;top:2114px;width:92px;height:52px;line-height:52px;text-align:center;font-family:'Liberation Sans',sans-serif;font-size:25px;color:#606266;">1</div>
<div style="position:absolute;left:3737px;top:2113.0px;height:50px;line-height:50px;font-family:'Liberation Sans',sans-serif;font-size:25px;color:#606266;font-weight:400;white-space:pre;">页</div>
<div style="position:absolute;left:1349px;top:2255.0px;height:48px;line-height:48px;font-family:'Liberation Sans',sans-serif;font-size:24px;color:#333;font-weight:400;white-space:pre;letter-spacing:0.45px;">宝塔Linux面板©2014–2025 广东堡塔安全技术有限公司 (bt.cn)</div>
<div style="position:absolute;left:2040px;top:2255.0px;height:48px;line-height:48px;font-family:'Liberation Sans',sans-serif;font-size:24px;color:#20a53a;font-weight:400;white-space:pre;">论坛求助</div>
<div style="position:absolute;left:2201px;top:2255.0px;height:48px;line-height:48px;font-family:'Liberation Sans',sans-serif;font-size:24px;color:#20a53a;font-weight:400;white-space:pre;">使用手册</div>
<div style="position:absolute;left:2363px;top:2255.0px;height:48px;line-height:48px;font-family:'Liberation Sans',sans-serif;font-size:24px;color:#20a53a;font-weight:400;white-space:pre;">微信公众号</div>
<div style="position:absolute;left:2549px;top:2255.0px;height:48px;line-height:48px;font-family:'Liberation Sans',sans-serif;font-size:24px;color:#20a53a;font-weight:400;white-space:pre;">正版查询</div>
<div style="position:absolute;left:2712px;top:2255.0px;height:48px;line-height:48px;font-family:'Liberation Sans',sans-serif;font-size:24px;color:#20a53a;font-weight:400;white-space:pre;">联系人工客服</div>
<div style="position:absolute;left:2167px;top:2266px;width:2px;height:26px;background:#dddddd;"></div>
<div style="position:absolute;left:2329px;top:2266px;width:2px;height:26px;background:#dddddd;"></div>
<div style="position:absolute;left:2515px;top:2266px;width:2px;height:26px;background:#dddddd;"></div>
<div style="position:absolute;left:2678px;top:2266px;width:2px;height:26px;background:#dddddd;"></div>
<div style="position:absolute;left:504px;top:260px;width:2860px;height:1929px;background:#f7f7f7;box-shadow:0 22px 70px rgba(0,0,0,0.16);border-radius:6px 6px 0 0;"></div>
<div style="position:absolute;left:504px;top:260px;width:2860px;height:85px;background:#f7f7f7;border-radius:6px;"></div>
<div style="position:absolute;left:504px;top:345px;width:2860px;height:2px;background:#eeeeee;"></div>
<div style="position:absolute;left:504px;top:347px;width:2860px;height:60px;background:#575757;"></div>
<div style="position:absolute;left:504px;top:407px;width:520px;height:80px;background:#353535;"></div>
<div style="position:absolute;left:504px;top:487px;width:520px;height:60px;background:#575757;"></div>
<div style="position:absolute;left:504px;top:547px;width:520px;height:1642px;background:#202020;"></div>
<div style="position:absolute;left:1024px;top:407px;width:2340px;height:88px;background:#333333;"></div>
<div style="position:absolute;left:1024px;top:495px;width:100px;height:1624px;background:#2f3129;"></div>
<div style="position:absolute;left:1124px;top:495px;width:2210px;height:1624px;background:#272822;"></div>
<div style="position:absolute;left:3334px;top:495px;width:30px;height:208px;background:#333333;"></div>
<div style="position:absolute;left:3334px;top:703px;width:30px;height:1416px;background:#777777;"></div>
<div style="position:absolute;left:1024px;top:2119px;width:2340px;height:70px;background:#595959;"></div>
<div style="position:absolute;left:545px;top:274.0px;height:56px;line-height:56px;font-family:'Liberation Sans',sans-serif;font-size:28px;color:#333;font-weight:400;white-space:pre;">在线文本编辑器</div>
<div style="position:absolute;left:3127px;top:299px;width:35px;height:6px;background:#333;border-radius:3px;"></div>
<svg style="position:absolute;left:3214px;top:284px;" width="36" height="36" viewBox="0 0 36 36"><path d="M3 17.5 V3 H33 V33 H18" fill="none" stroke="#333" stroke-width="2.2" stroke-linejoin="round"/><rect x="3" y="22.2" width="11" height="10.8" rx="0.5" fill="none" stroke="#333" stroke-width="2.2"/><path d="M16.7 18.7 L27.2 9" fill="none" stroke="#333" stroke-width="2.2" stroke-linecap="round"/><path d="M18.4 8.8 H27.4 V17.6" fill="none" stroke="#333" stroke-width="2.2" stroke-linecap="round" stroke-linejoin="round"/></svg>
<svg style="position:absolute;left:3304px;top:286px;" width="32" height="32" viewBox="0 0 32 32"><path d="M2.5 2.5 L29.5 29.5 M29.5 2.5 L2.5 29.5" stroke="#333" stroke-width="2.9" stroke-linecap="round"/></svg>
<div style="position:absolute;left:655px;top:347px;width:2px;height:60px;background:#4a4a4a;"></div>
<div style="position:absolute;left:858px;top:347px;width:2px;height:60px;background:#4a4a4a;"></div>
<div style="position:absolute;left:1011px;top:347px;width:2px;height:60px;background:#4a4a4a;"></div>
<div style="position:absolute;left:1163px;top:347px;width:2px;height:60px;background:#4a4a4a;"></div>
<div style="position:absolute;left:1315px;top:347px;width:2px;height:60px;background:#4a4a4a;"></div>
<div style="position:absolute;left:1493px;top:347px;width:2px;height:60px;background:#4a4a4a;"></div>
<div style="position:absolute;left:1697px;top:347px;width:2px;height:60px;background:#4a4a4a;"></div>
<div style="position:absolute;left:1849px;top:347px;width:2px;height:60px;background:#4a4a4a;"></div>
<div style="position:absolute;left:2001px;top:347px;width:2px;height:60px;background:#4a4a4a;"></div>
<div style="position:absolute;left:2179px;top:347px;width:2px;height:60px;background:#4a4a4a;"></div>
<svg style="position:absolute;left:536px;top:364px;" width="24" height="24" viewBox="0 0 24 24"><path d="M2 12 L9 19 L22 5" fill="none" stroke="#f2f2f2" stroke-width="3.5"/></svg>
<div style="position:absolute;left:572px;top:351.0px;height:52px;line-height:52px;font-family:'Liberation Sans',sans-serif;font-size:26px;color:#f2f2f2;font-weight:400;white-space:pre;-webkit-text-stroke-width:0.5px;">保存</div>
<svg style="position:absolute;left:689px;top:364px;" width="24" height="24" viewBox="0 0 24 24"><rect x="2" y="7" width="14" height="15" fill="none" stroke="#f2f2f2" stroke-width="2"/><path d="M7 7 V2 H22 V17 H16" fill="none" stroke="#f2f2f2" stroke-width="2"/></svg>
<div style="position:absolute;left:725px;top:351.0px;height:52px;line-height:52px;font-family:'Liberation Sans',sans-serif;font-size:26px;color:#f2f2f2;font-weight:400;white-space:pre;-webkit-text-stroke-width:0.5px;">全部保存</div>
<svg style="position:absolute;left:892px;top:364px;" width="24" height="24" viewBox="0 0 24 24"><path d="M19.5 6 A9.5 9.5 0 1 0 21.5 14" fill="none" stroke="#f2f2f2" stroke-width="2.2"/><path d="M15 2 L21 2 L21 8" fill="none" stroke="#f2f2f2" stroke-width="2.2"/></svg>
<div style="position:absolute;left:928px;top:351.0px;height:52px;line-height:52px;font-family:'Liberation Sans',sans-serif;font-size:26px;color:#f2f2f2;font-weight:400;white-space:pre;-webkit-text-stroke-width:0.5px;">刷新</div>
<svg style="position:absolute;left:1044px;top:364px;" width="24" height="24" viewBox="0 0 24 24"><circle cx="11" cy="11" r="9" fill="none" stroke="#f2f2f2" stroke-width="2.2"/><path d="M17.5 17.5 L22 22" stroke="#f2f2f2" stroke-width="2.2"/></svg>
<div style="position:absolute;left:1081px;top:351.0px;height:52px;line-height:52px;font-family:'Liberation Sans',sans-serif;font-size:26px;color:#f2f2f2;font-weight:400;white-space:pre;-webkit-text-stroke-width:0.5px;">搜索</div>
<svg style="position:absolute;left:1196px;top:364px;" width="24" height="24" viewBox="0 0 24 24"><path d="M16 10 V2 H2 V22 H11" fill="none" stroke="#f2f2f2" stroke-width="2"/><path d="M5 7 H13 M5 12 H9 M5 17 H9" stroke="#f2f2f2" stroke-width="2"/><circle cx="16" cy="16" r="3.5" fill="none" stroke="#f2f2f2" stroke-width="2"/><path d="M18.5 18.5 L22 22" stroke="#f2f2f2" stroke-width="2"/></svg>
<div style="position:absolute;left:1233px;top:351.0px;height:52px;line-height:52px;font-family:'Liberation Sans',sans-serif;font-size:26px;color:#f2f2f2;font-weight:400;white-space:pre;-webkit-text-stroke-width:0.5px;">替换</div>
<svg style="position:absolute;left:1349px;top:364px;" width="24" height="24" viewBox="0 0 24 24"><path d="M12 20 C6 13 5 11 5 8.5 A7 7 0 0 1 19 8.5 C19 11 18 13 12 20 Z" fill="none" stroke="#f2f2f2" stroke-width="2"/><circle cx="12" cy="8.5" r="2.5" fill="none" stroke="#f2f2f2" stroke-width="2"/><path d="M7 17 C2 18 2 22 12 22 C22 22 22 18 17 17" fill="none" stroke="#f2f2f2" stroke-width="2"/></svg>
<div style="position:absolute;left:1385px;top:351.0px;height:52px;line-height:52px;font-family:'Liberation Sans',sans-serif;font-size:26px;color:#f2f2f2;font-weight:400;white-space:pre;-webkit-text-stroke-width:0.5px;">跳转行</div>
<svg style="position:absolute;left:1526px;top:364px;" width="24" height="24" viewBox="0 0 24 24"><rect x="1.5" y="2.5" width="21" height="19" fill="none" stroke="#f2f2f2" stroke-width="2"/><path d="M1.5 6.5 H22.5" stroke="#f2f2f2" stroke-width="2"/><path d="M5 10 L9 13 L5 16 M10 17 H15" fill="none" stroke="#f2f2f2" stroke-width="1.8"/></svg>
<div style="position:absolute;left:1563px;top:351.0px;height:52px;line-height:52px;font-family:'Liberation Sans',sans-serif;font-size:26px;color:#f2f2f2;font-weight:400;white-space:pre;-webkit-text-stroke-width:0.5px;">字体大小</div>
<svg style="position:absolute;left:1731px;top:364px;" width="24" height="24" viewBox="0 0 24 24"><path d="M1 4 H23 M1 12 H23 M1 20 H23" stroke="#f2f2f2" stroke-width="2.2"/></svg>
<div style="position:absolute;left:1767px;top:351.0px;height:52px;line-height:52px;font-family:'Liberation Sans',sans-serif;font-size:26px;color:#f2f2f2;font-weight:400;white-space:pre;-webkit-text-stroke-width:0.5px;">主题</div>
<svg style="position:absolute;left:1882px;top:364px;" width="24" height="24" viewBox="0 0 24 24"><circle cx="12" cy="12" r="4" fill="none" stroke="#f2f2f2" stroke-width="2"/><path d="M10 1.5 H14 L15 4.5 L17.5 5.8 L20.5 4.5 L22.5 7.8 L20.5 10 V14 L22.5 16.2 L20.5 19.5 L17.5 18.2 L15 19.5 L14 22.5 H10 L9 19.5 L6.5 18.2 L3.5 19.5 L1.5 16.2 L3.5 14 V10 L1.5 7.8 L3.5 4.5 L6.5 5.8 L9 4.5 Z" fill="none" stroke="#f2f2f2" stroke-width="1.8" stroke-linejoin="round"/></svg>
<div style="position:absolute;left:1919px;top:351.0px;height:52px;line-height:52px;font-family:'Liberation Sans',sans-serif;font-size:26px;color:#f2f2f2;font-weight:400;white-space:pre;-webkit-text-stroke-width:0.5px;">设置</div>
<svg style="position:absolute;left:2034px;top:364px;" width="24" height="24" viewBox="0 0 24 24"><circle cx="12" cy="12" r="12" fill="#f2f2f2"/><text x="12" y="18.5" font-size="18" font-family="Liberation Sans" font-weight="700" fill="#575757" text-anchor="middle">?</text></svg>
<div style="position:absolute;left:2071px;top:351.0px;height:52px;line-height:52px;font-family:'Liberation Sans',sans-serif;font-size:26px;color:#f2f2f2;font-weight:400;white-space:pre;-webkit-text-stroke-width:0.5px;">快捷键</div>
<div style="position:absolute;left:1022px;top:407px;width:2px;height:80px;background:#2c2c2c;"></div>
<div style="position:absolute;left:535px;top:422px;height:52px;line-height:52px;font-family:'Liberation Sans',sans-serif;font-size:26px;color:#fff;white-space:pre;">目录：<span style="letter-spacing:1.35px">/www/wwwroot/demo.imai....</span></div>
<div style="position:absolute;left:553px;top:492.0px;height:48px;line-height:48px;font-family:'Liberation Sans',sans-serif;font-size:24px;color:#f2f2f2;font-weight:400;white-space:pre;">上一级</div>
<svg style="position:absolute;left:523px;top:506px;" width="20" height="22" viewBox="0 0 20 22"><path d="M10 21 V2 M3 9 L10 2 L17 9" fill="none" stroke="#f2f2f2" stroke-width="2"/></svg>
<svg style="position:absolute;left:673px;top:505px;" width="22" height="22" viewBox="0 0 22 22"><path d="M18 5 A8.5 8.5 0 1 0 20 12" fill="none" stroke="#f2f2f2" stroke-width="2"/><path d="M13.5 1.5 L19 1.5 L19 7" fill="none" stroke="#f2f2f2" stroke-width="2"/></svg>
<div style="position:absolute;left:706px;top:492.0px;height:48px;line-height:48px;font-family:'Liberation Sans',sans-serif;font-size:24px;color:#f2f2f2;font-weight:400;white-space:pre;">刷新</div>
<svg style="position:absolute;left:800px;top:506px;" width="21" height="21" viewBox="0 0 21 21"><path d="M10.5 0 V21 M0 10.5 H21" stroke="#f2f2f2" stroke-width="2"/></svg>
<div style="position:absolute;left:833px;top:492.0px;height:48px;line-height:48px;font-family:'Liberation Sans',sans-serif;font-size:24px;color:#f2f2f2;font-weight:400;white-space:pre;">新建</div>
<svg style="position:absolute;left:926px;top:505px;" width="23" height="23" viewBox="0 0 23 23"><circle cx="10" cy="10" r="8.5" fill="none" stroke="#f2f2f2" stroke-width="2"/><path d="M16 16 L21 21" stroke="#f2f2f2" stroke-width="2"/></svg>
<div style="position:absolute;left:960px;top:492.0px;height:48px;line-height:48px;font-family:'Liberation Sans',sans-serif;font-size:24px;color:#f2f2f2;font-weight:400;white-space:pre;">搜索</div>
<svg style="position:absolute;left:534px;top:575px;" width="11" height="16" viewBox="0 0 11 16"><path d="M1 0 L10 8 L1 16 Z" fill="#a5a9b5"/></svg>
<svg style="position:absolute;left:561px;top:570px;" width="29" height="26" viewBox="0 0 29 26"><path d="M0 3 C0 1.5 1 1 2 1 H9 C10 1 10.5 1.5 11 2.5 L11.5 4 H27 C28 4 29 5 29 6 V25 H0 Z" fill="#d4ad4a"/><path d="M3 3.5 H9" stroke="#202020" stroke-width="1" opacity="0.5"/></svg>
<div style="position:absolute;left:607px;top:558.0px;height:50px;line-height:50px;font-family:'Liberation Sans',sans-serif;font-size:25px;color:#dedede;font-weight:400;white-space:pre;">.git</div>
<svg style="position:absolute;left:534px;top:627px;" width="11" height="16" viewBox="0 0 11 16"><path d="M1 0 L10 8 L1 16 Z" fill="#a5a9b5"/></svg>
<svg style="position:absolute;left:561px;top:622px;" width="29" height="26" viewBox="0 0 29 26"><path d="M0 3 C0 1.5 1 1 2 1 H9 C10 1 10.5 1.5 11 2.5 L11.5 4 H27 C28 4 29 5 29 6 V25 H0 Z" fill="#d4ad4a"/><path d="M3 3.5 H9" stroke="#202020" stroke-width="1" opacity="0.5"/></svg>
<div style="position:absolute;left:607px;top:610.0px;height:50px;line-height:50px;font-family:'Liberation Sans',sans-serif;font-size:25px;color:#dedede;font-weight:400;white-space:pre;">__MACOSX</div>
<svg style="position:absolute;left:534px;top:679px;" width="11" height="16" viewBox="0 0 11 16"><path d="M1 0 L10 8 L1 16 Z" fill="#a5a9b5"/></svg>
<svg style="position:absolute;left:561px;top:674px;" width="29" height="26" viewBox="0 0 29 26"><path d="M0 3 C0 1.5 1 1 2 1 H9 C10 1 10.5 1.5 11 2.5 L11.5 4 H27 C28 4 29 5 29 6 V25 H0 Z" fill="#d4ad4a"/><path d="M3 3.5 H9" stroke="#202020" stroke-width="1" opacity="0.5"/></svg>
<div style="position:absolute;left:607px;top:662.0px;height:50px;line-height:50px;font-family:'Liberation Sans',sans-serif;font-size:25px;color:#dedede;font-weight:400;white-space:pre;">app</div>
<svg style="position:absolute;left:534px;top:731px;" width="11" height="16" viewBox="0 0 11 16"><path d="M1 0 L10 8 L1 16 Z" fill="#a5a9b5"/></svg>
<svg style="position:absolute;left:561px;top:726px;" width="29" height="26" viewBox="0 0 29 26"><path d="M0 3 C0 1.5 1 1 2 1 H9 C10 1 10.5 1.5 11 2.5 L11.5 4 H27 C28 4 29 5 29 6 V25 H0 Z" fill="#d4ad4a"/><path d="M3 3.5 H9" stroke="#202020" stroke-width="1" opacity="0.5"/></svg>
<div style="position:absolute;left:607px;top:714.0px;height:50px;line-height:50px;font-family:'Liberation Sans',sans-serif;font-size:25px;color:#dedede;font-weight:400;white-space:pre;">config</div>
<svg style="position:absolute;left:534px;top:783px;" width="11" height="16" viewBox="0 0 11 16"><path d="M1 0 L10 8 L1 16 Z" fill="#a5a9b5"/></svg>
<svg style="position:absolute;left:561px;top:778px;" width="29" height="26" viewBox="0 0 29 26"><path d="M0 3 C0 1.5 1 1 2 1 H9 C10 1 10.5 1.5 11 2.5 L11.5 4 H27 C28 4 29 5 29 6 V25 H0 Z" fill="#d4ad4a"/><path d="M3 3.5 H9" stroke="#202020" stroke-width="1" opacity="0.5"/></svg>
<div style="position:absolute;left:607px;top:766.0px;height:50px;line-height:50px;font-family:'Liberation Sans',sans-serif;font-size:25px;color:#dedede;font-weight:400;white-space:pre;">extend</div>
<svg style="position:absolute;left:534px;top:835px;" width="11" height="16" viewBox="0 0 11 16"><path d="M1 0 L10 8 L1 16 Z" fill="#a5a9b5"/></svg>
<svg style="position:absolute;left:561px;top:830px;" width="29" height="26" viewBox="0 0 29 26"><path d="M0 3 C0 1.5 1 1 2 1 H9 C10 1 10.5 1.5 11 2.5 L11.5 4 H27 C28 4 29 5 29 6 V25 H0 Z" fill="#d4ad4a"/><path d="M3 3.5 H9" stroke="#202020" stroke-width="1" opacity="0.5"/></svg>
<div style="position:absolute;left:607px;top:818.0px;height:50px;line-height:50px;font-family:'Liberation Sans',sans-serif;font-size:25px;color:#dedede;font-weight:400;white-space:pre;">public</div>
<svg style="position:absolute;left:534px;top:887px;" width="11" height="16" viewBox="0 0 11 16"><path d="M1 0 L10 8 L1 16 Z" fill="#a5a9b5"/></svg>
<svg style="position:absolute;left:561px;top:882px;" width="29" height="26" viewBox="0 0 29 26"><path d="M0 3 C0 1.5 1 1 2 1 H9 C10 1 10.5 1.5 11 2.5 L11.5 4 H27 C28 4 29 5 29 6 V25 H0 Z" fill="#d4ad4a"/><path d="M3 3.5 H9" stroke="#202020" stroke-width="1" opacity="0.5"/></svg>
<div style="position:absolute;left:607px;top:870.0px;height:50px;line-height:50px;font-family:'Liberation Sans',sans-serif;font-size:25px;color:#dedede;font-weight:400;white-space:pre;">route</div>
<svg style="position:absolute;left:534px;top:939px;" width="11" height="16" viewBox="0 0 11 16"><path d="M1 0 L10 8 L1 16 Z" fill="#a5a9b5"/></svg>
<svg style="position:absolute;left:561px;top:934px;" width="29" height="26" viewBox="0 0 29 26"><path d="M0 3 C0 1.5 1 1 2 1 H9 C10 1 10.5 1.5 11 2.5 L11.5 4 H27 C28 4 29 5 29 6 V25 H0 Z" fill="#d4ad4a"/><path d="M3 3.5 H9" stroke="#202020" stroke-width="1" opacity="0.5"/></svg>
<div style="position:absolute;left:607px;top:922.0px;height:50px;line-height:50px;font-family:'Liberation Sans',sans-serif;font-size:25px;color:#dedede;font-weight:400;white-space:pre;">runtime</div>
<svg style="position:absolute;left:534px;top:991px;" width="11" height="16" viewBox="0 0 11 16"><path d="M1 0 L10 8 L1 16 Z" fill="#a5a9b5"/></svg>
<svg style="position:absolute;left:561px;top:986px;" width="29" height="26" viewBox="0 0 29 26"><path d="M0 3 C0 1.5 1 1 2 1 H9 C10 1 10.5 1.5 11 2.5 L11.5 4 H27 C28 4 29 5 29 6 V25 H0 Z" fill="#d4ad4a"/><path d="M3 3.5 H9" stroke="#202020" stroke-width="1" opacity="0.5"/></svg>
<div style="position:absolute;left:607px;top:974.0px;height:50px;line-height:50px;font-family:'Liberation Sans',sans-serif;font-size:25px;color:#dedede;font-weight:400;white-space:pre;">vendor</div>
<svg style="position:absolute;left:561px;top:1036px;" width="25" height="30" viewBox="0 0 25 30"><path d="M0.5 0.5 H18 L24.5 7 V29.5 H0.5 Z" fill="#dedede"/><path d="M3.2 3.2 H16.8 L21.8 8.2 V26.8 H3.2 Z" fill="#202020"/><g fill="#dedede"><rect x="5" y="6.7" width="9" height="2"/><rect x="5" y="12.8" width="15" height="2.2"/><rect x="5" y="16.5" width="15" height="2.2"/><rect x="5" y="20.2" width="15" height="2.2"/></g></svg>
<div style="position:absolute;left:603px;top:1027.0px;height:48px;line-height:48px;font-family:'Liberation Sans',sans-serif;font-size:24.4px;color:#d4b03a;font-weight:400;white-space:pre;">.env</div>
<svg style="position:absolute;left:561px;top:1088px;" width="25" height="30" viewBox="0 0 25 30"><path d="M0.5 0.5 H18 L24.5 7 V29.5 H0.5 Z" fill="#dedede"/><path d="M3.2 3.2 H16.8 L21.8 8.2 V26.8 H3.2 Z" fill="#202020"/><g fill="#dedede"><rect x="5" y="6.7" width="9" height="2"/><rect x="5" y="12.8" width="15" height="2.2"/><rect x="5" y="16.5" width="15" height="2.2"/><rect x="5" y="20.2" width="15" height="2.2"/></g></svg>
<div style="position:absolute;left:603px;top:1079.0px;height:48px;line-height:48px;font-family:'Liberation Sans',sans-serif;font-size:24.4px;color:#d4b03a;font-weight:400;white-space:pre;">.example.env</div>
<svg style="position:absolute;left:561px;top:1140px;" width="25" height="30" viewBox="0 0 25 30"><path d="M0.5 0.5 H18 L24.5 7 V29.5 H0.5 Z" fill="#dedede"/><path d="M3.2 3.2 H16.8 L21.8 8.2 V26.8 H3.2 Z" fill="#202020"/><g fill="#dedede"><rect x="5" y="6.7" width="9" height="2"/><rect x="5" y="12.8" width="15" height="2.2"/><rect x="5" y="16.5" width="15" height="2.2"/><rect x="5" y="20.2" width="15" height="2.2"/></g></svg>
<div style="position:absolute;left:603px;top:1131.0px;height:48px;line-height:48px;font-family:'Liberation Sans',sans-serif;font-size:24.4px;color:#dedede;font-weight:400;white-space:pre;">.gitattributes</div>
<svg style="position:absolute;left:561px;top:1192px;" width="25" height="30" viewBox="0 0 25 30"><path d="M0.5 0.5 H18 L24.5 7 V29.5 H0.5 Z" fill="#dedede"/><path d="M3.2 3.2 H16.8 L21.8 8.2 V26.8 H3.2 Z" fill="#202020"/><g fill="#dedede"><rect x="5" y="6.7" width="9" height="2"/><rect x="5" y="12.8" width="15" height="2.2"/><rect x="5" y="16.5" width="15" height="2.2"/><rect x="5" y="20.2" width="15" height="2.2"/></g></svg>
<div style="position:absolute;left:603px;top:1183.0px;height:48px;line-height:48px;font-family:'Liberation Sans',sans-serif;font-size:24.4px;color:#dedede;font-weight:400;white-space:pre;">.gitignore</div>
<svg style="position:absolute;left:561px;top:1244px;" width="29" height="30" viewBox="0 0 29 30"><path d="M0.5 1 H9.5 L15 12.5 L19.5 1 H28 L13.5 29 H4.5 L10 18.5 Z" fill="#d9d9d9"/></svg>
<div style="position:absolute;left:605px;top:1234.0px;height:50px;line-height:50px;font-family:'Liberation Sans',sans-serif;font-size:25px;color:#dedede;font-weight:400;white-space:pre;">.travis.yml</div>
<svg style="position:absolute;left:561px;top:1296px;" width="25" height="30" viewBox="0 0 25 30"><path d="M0.5 0.5 H18 L24.5 7 V29.5 H0.5 Z" fill="#dedede"/><path d="M3.2 3.2 H16.8 L21.8 8.2 V26.8 H3.2 Z" fill="#202020"/><g fill="#dedede"><rect x="5" y="6.7" width="9" height="2"/><rect x="5" y="12.8" width="15" height="2.2"/><rect x="5" y="16.5" width="15" height="2.2"/><rect x="5" y="20.2" width="15" height="2.2"/></g></svg>
<div style="position:absolute;left:603px;top:1287.0px;height:48px;line-height:48px;font-family:'Liberation Sans',sans-serif;font-size:24.4px;color:#dedede;font-weight:400;white-space:pre;">.user.ini</div>
<svg style="position:absolute;left:561px;top:1348px;" width="30" height="30" viewBox="0 0 30 30"><circle cx="15" cy="15" r="14" fill="#6bb5a4"/><circle cx="15" cy="15" r="9" fill="#202020"/><path d="M9 8 C14 4 22 7 21 15 C20 21 14 23 12 21" fill="none" stroke="#6bb5a4" stroke-width="4"/></svg>
<div style="position:absolute;left:608px;top:1338.0px;height:50px;line-height:50px;font-family:'Liberation Sans',sans-serif;font-size:25px;color:#dedede;font-weight:400;white-space:pre;">composer.json</div>
<svg style="position:absolute;left:561px;top:1400px;" width="25" height="30" viewBox="0 0 25 30"><path d="M0.5 0.5 H18 L24.5 7 V29.5 H0.5 Z" fill="#dedede"/><path d="M3.2 3.2 H16.8 L21.8 8.2 V26.8 H3.2 Z" fill="#202020"/><g fill="#dedede"><rect x="5" y="6.7" width="9" height="2"/><rect x="5" y="12.8" width="15" height="2.2"/><rect x="5" y="16.5" width="15" height="2.2"/><rect x="5" y="20.2" width="15" height="2.2"/></g></svg>
<div style="position:absolute;left:603px;top:1391.0px;height:48px;line-height:48px;font-family:'Liberation Sans',sans-serif;font-size:24.4px;color:#dedede;font-weight:400;white-space:pre;">install.lock</div>
<svg style="position:absolute;left:561px;top:1452px;" width="25" height="30" viewBox="0 0 25 30"><path d="M0.5 0.5 H18 L24.5 7 V29.5 H0.5 Z" fill="#dedede"/><path d="M3.2 3.2 H16.8 L21.8 8.2 V26.8 H3.2 Z" fill="#202020"/><g fill="#dedede"><rect x="5" y="6.7" width="9" height="2"/><rect x="5" y="12.8" width="15" height="2.2"/><rect x="5" y="16.5" width="15" height="2.2"/><rect x="5" y="20.2" width="15" height="2.2"/></g></svg>
<div style="position:absolute;left:603px;top:1443.0px;height:48px;line-height:48px;font-family:'Liberation Sans',sans-serif;font-size:24.4px;color:#dedede;font-weight:400;white-space:pre;">LICENSE.txt</div>
<svg style="position:absolute;left:561px;top:1504px;" width="29" height="30" viewBox="0 0 29 30"><path d="M0.5 1 H9.5 L15 12.5 L19.5 1 H28 L13.5 29 H4.5 L10 18.5 Z" fill="#d9d9d9"/></svg>
<div style="position:absolute;left:605px;top:1494.0px;height:50px;line-height:50px;font-family:'Liberation Sans',sans-serif;font-size:25px;color:#dedede;font-weight:400;white-space:pre;">qodana.yaml</div>
<svg style="position:absolute;left:561px;top:1557px;" width="34" height="27" viewBox="0 0 34 27"><rect x="0" y="3" width="33" height="21" rx="2" fill="#6f9fbd"/><text x="3" y="20" font-size="15" font-family="Liberation Sans" font-weight="700" fill="#202020">M</text><path d="M24 7 V18 M20 14 L24 19 L28 14" fill="none" stroke="#202020" stroke-width="2.8"/></svg>
<div style="position:absolute;left:609px;top:1546.0px;height:50px;line-height:50px;font-family:'Liberation Sans',sans-serif;font-size:25px;color:#dedede;font-weight:400;white-space:pre;">README.en.md</div>
<svg style="position:absolute;left:561px;top:1609px;" width="34" height="27" viewBox="0 0 34 27"><rect x="0" y="3" width="33" height="21" rx="2" fill="#6f9fbd"/><text x="3" y="20" font-size="15" font-family="Liberation Sans" font-weight="700" fill="#202020">M</text><path d="M24 7 V18 M20 14 L24 19 L28 14" fill="none" stroke="#202020" stroke-width="2.8"/></svg>
<div style="position:absolute;left:609px;top:1598.0px;height:50px;line-height:50px;font-family:'Liberation Sans',sans-serif;font-size:25px;color:#dedede;font-weight:400;white-space:pre;">README.md</div>
<svg style="position:absolute;left:561px;top:1660px;" width="25" height="30" viewBox="0 0 25 30"><path d="M0.5 0.5 H18 L24.5 7 V29.5 H0.5 Z" fill="#dedede"/><path d="M3.2 3.2 H16.8 L21.8 8.2 V26.8 H3.2 Z" fill="#202020"/><g fill="#dedede"><rect x="5" y="6.7" width="9" height="2"/><rect x="5" y="12.8" width="15" height="2.2"/><rect x="5" y="16.5" width="15" height="2.2"/><rect x="5" y="20.2" width="15" height="2.2"/></g></svg>
<div style="position:absolute;left:603px;top:1651.0px;height:48px;line-height:48px;font-family:'Liberation Sans',sans-serif;font-size:24.4px;color:#dedede;font-weight:400;white-space:pre;">think</div>
<svg style="position:absolute;left:561px;top:1712px;" width="26" height="30" viewBox="0 0 26 30"><path d="M1.5 1.5 H17 L24 8.5 V28 H1.5 Z" fill="none" stroke="#4a8db5" stroke-width="2.2"/><path d="M9 3 V18" stroke="#4a8db5" stroke-width="2" stroke-dasharray="2 2"/><rect x="6.5" y="18" width="6" height="6" fill="none" stroke="#4a8db5" stroke-width="2"/></svg>
<div style="position:absolute;left:603px;top:1702.0px;height:50px;line-height:50px;font-family:'Liberation Sans',sans-serif;font-size:25px;color:#dedede;font-weight:400;white-space:pre;">归档.zip</div>
<div style="position:absolute;left:550px;top:1067px;width:245px;height:71px;border:4.5px solid #ff0000;"></div>
<div style="position:absolute;left:1229px;top:411px;width:323px;height:84px;background:#222222;"></div>
<div style="position:absolute;left:1231px;top:487px;width:319px;height:4px;background:#20a53a;"></div>
<svg style="position:absolute;left:1043px;top:437px;" width="25" height="30" viewBox="0 0 25 30"><path d="M0.5 0.5 H18 L24.5 7 V29.5 H0.5 Z" fill="#dedede"/><path d="M3.2 3.2 H16.8 L21.8 8.2 V26.8 H3.2 Z" fill="#333333"/><g fill="#dedede"><rect x="5" y="6.7" width="9" height="2"/><rect x="5" y="12.8" width="15" height="2.2"/><rect x="5" y="16.5" width="15" height="2.2"/><rect x="5" y="20.2" width="15" height="2.2"/></g></svg>
<div style="position:absolute;left:1087px;top:424.0px;height:56px;line-height:56px;font-family:'Liberation Sans',sans-serif;font-size:28px;color:#9a9a9a;font-weight:400;white-space:pre;">.env</div>
<svg style="position:absolute;left:1184px;top:441px;" width="20" height="20" viewBox="0 0 20 20"><path d="M2 2 L18 18 M18 2 L2 18" stroke="#fff" stroke-width="3"/></svg>
<svg style="position:absolute;left:1249px;top:437px;" width="25" height="30" viewBox="0 0 25 30"><path d="M0.5 0.5 H18 L24.5 7 V29.5 H0.5 Z" fill="#dedede"/><path d="M3.2 3.2 H16.8 L21.8 8.2 V26.8 H3.2 Z" fill="#222222"/><g fill="#dedede"><rect x="5" y="6.7" width="9" height="2"/><rect x="5" y="12.8" width="15" height="2.2"/><rect x="5" y="16.5" width="15" height="2.2"/><rect x="5" y="20.2" width="15" height="2.2"/></g></svg>
<div style="position:absolute;left:1294px;top:424.0px;height:56px;line-height:56px;font-family:'Liberation Sans',sans-serif;font-size:28px;color:#9a9a9a;font-weight:400;white-space:pre;">.example.env</div>
<svg style="position:absolute;left:1506px;top:441px;" width="20" height="20" viewBox="0 0 20 20"><path d="M2 2 L18 18 M18 2 L2 18" stroke="#fff" stroke-width="3"/></svg>
<div style="position:absolute;left:1054px;top:2128.5px;height:51px;line-height:51px;font-family:'Liberation Sans',sans-serif;font-size:25.5px;color:#f0f0f0;font-weight:400;white-space:pre;">文件位置：/www/wwwroot/demo.imai.work/.example.env</div>
<div style="position:absolute;left:2353px;top:2119px;width:2px;height:70px;background:#4d4d4d;"></div>
<div style="position:absolute;left:2519px;top:2119px;width:2px;height:70px;background:#4d4d4d;"></div>
<div style="position:absolute;left:2753px;top:2119px;width:2px;height:70px;background:#4d4d4d;"></div>
<div style="position:absolute;left:2935px;top:2119px;width:2px;height:70px;background:#4d4d4d;"></div>
<div style="position:absolute;left:3139px;top:2119px;width:2px;height:70px;background:#4d4d4d;"></div>
<div style="position:absolute;left:3333px;top:2119px;width:2px;height:70px;background:#4d4d4d;"></div>
<div style="position:absolute;left:2255px;top:2128.0px;height:52px;line-height:52px;font-family:'Liberation Sans',sans-serif;font-size:26px;color:#f0f0f0;font-weight:400;white-space:pre;">CRLF</div>
<div style="position:absolute;left:2385px;top:2128.0px;height:52px;line-height:52px;font-family:'Liberation Sans',sans-serif;font-size:26px;color:#f0f0f0;font-weight:400;white-space:pre;">行1，列0</div>
<div style="position:absolute;left:2550px;top:2128.0px;height:52px;line-height:52px;font-family:'Liberation Sans',sans-serif;font-size:26px;color:#f0f0f0;font-weight:400;white-space:pre;">历史版本：0份</div>
<div style="position:absolute;left:2785px;top:2128.0px;height:52px;line-height:52px;font-family:'Liberation Sans',sans-serif;font-size:26px;color:#f0f0f0;font-weight:400;white-space:pre;">制表符：4</div>
<div style="position:absolute;left:2967px;top:2128.0px;height:52px;line-height:52px;font-family:'Liberation Sans',sans-serif;font-size:26px;color:#f0f0f0;font-weight:400;white-space:pre;">编码：utf-8</div>
<div style="position:absolute;left:3172px;top:2128.0px;height:52px;line-height:52px;font-family:'Liberation Sans',sans-serif;font-size:26px;color:#f0f0f0;font-weight:400;white-space:pre;">语言：Text</div>
<div style="position:absolute;left:1023px;top:495px;width:2311px;height:1624px;overflow:hidden;">
<div style="position:absolute;left:0px;width:75px;top:-7.8px;height:38px;line-height:38px;text-align:right;font-family:'Liberation Mono',monospace;font-size:28px;color:#8f908a;letter-spacing:-0.03px;transform:scaleY(1.2);">7</div>
<div style="position:absolute;left:108px;top:-7.8px;height:38px;line-height:38px;width:2000px;font-family:'Liberation Mono',monospace;font-size:28px;color:#f8f8f2;white-space:pre;transform:scaleY(1.2);-webkit-text-stroke-width:0.35px;"><span style="position:absolute;left:0.00px;color:#5c5c55">¤</span></div>
<div style="position:absolute;left:0px;width:75px;top:30.2px;height:38px;line-height:38px;text-align:right;font-family:'Liberation Mono',monospace;font-size:28px;color:#8f908a;letter-spacing:-0.03px;transform:scaleY(1.2);">8</div>
<div style="position:absolute;left:108px;top:30.2px;height:38px;line-height:38px;width:2000px;font-family:'Liberation Mono',monospace;font-size:28px;color:#f8f8f2;white-space:pre;transform:scaleY(1.2);-webkit-text-stroke-width:0.35px;"><span style="position:absolute;left:0.00px;letter-spacing:-0.03px">[DATABASE]</span><span style="position:absolute;left:167.70px;color:#5c5c55">¤</span></div>
<div style="position:absolute;left:0px;width:75px;top:68.2px;height:38px;line-height:38px;text-align:right;font-family:'Liberation Mono',monospace;font-size:28px;color:#8f908a;letter-spacing:-0.03px;transform:scaleY(1.2);">9</div>
<div style="position:absolute;left:108px;top:68.2px;height:38px;line-height:38px;width:2000px;font-family:'Liberation Mono',monospace;font-size:28px;color:#f8f8f2;white-space:pre;transform:scaleY(1.2);-webkit-text-stroke-width:0.35px;"><span style="position:absolute;left:0.00px;letter-spacing:-0.03px">TYPE</span><span style="position:absolute;left:67.08px;width:16.77px;text-align:center;color:#5c5c55">·</span><span style="position:absolute;left:83.85px;letter-spacing:-0.03px">=</span><span style="position:absolute;left:100.62px;width:16.77px;text-align:center;color:#5c5c55">·</span><span style="position:absolute;left:117.39px;letter-spacing:-0.03px">mysql</span><span style="position:absolute;left:201.24px;color:#5c5c55">¤</span></div>
<div style="position:absolute;left:0px;width:75px;top:106.2px;height:38px;line-height:38px;text-align:right;font-family:'Liberation Mono',monospace;font-size:28px;color:#8f908a;letter-spacing:-0.03px;transform:scaleY(1.2);">10</div>
<div style="position:absolute;left:108px;top:106.2px;height:38px;line-height:38px;width:2000px;font-family:'Liberation Mono',monospace;font-size:28px;color:#f8f8f2;white-space:pre;transform:scaleY(1.2);-webkit-text-stroke-width:0.35px;"><span style="position:absolute;left:0.00px;letter-spacing:-0.03px">HOSTNAME</span><span style="position:absolute;left:134.16px;width:16.77px;text-align:center;color:#5c5c55">·</span><span style="position:absolute;left:150.93px;letter-spacing:-0.03px">=</span><span style="position:absolute;left:167.70px;width:16.77px;text-align:center;color:#5c5c55">·</span><span style="position:absolute;left:184.47px;letter-spacing:-0.03px">127.0.0.1</span><span style="position:absolute;left:335.40px;color:#5c5c55">¤</span></div>
<div style="position:absolute;left:0px;width:75px;top:144.2px;height:38px;line-height:38px;text-align:right;font-family:'Liberation Mono',monospace;font-size:28px;color:#8f908a;letter-spacing:-0.03px;transform:scaleY(1.2);">11</div>
<div style="position:absolute;left:108px;top:144.2px;height:38px;line-height:38px;width:2000px;font-family:'Liberation Mono',monospace;font-size:28px;color:#f8f8f2;white-space:pre;transform:scaleY(1.2);-webkit-text-stroke-width:0.35px;"><span style="position:absolute;left:0.00px;letter-spacing:-0.03px">DATABASE</span><span style="position:absolute;left:134.16px;width:16.77px;text-align:center;color:#5c5c55">·</span><span style="position:absolute;left:150.93px;letter-spacing:-0.03px">=</span><span style="position:absolute;left:167.70px;width:16.77px;text-align:center;color:#5c5c55">·</span><span style="position:absolute;left:184.47px;letter-spacing:-0.03px">test</span><span style="position:absolute;left:251.55px;color:#5c5c55">¤</span></div>
<div style="position:absolute;left:0px;width:75px;top:182.2px;height:38px;line-height:38px;text-align:right;font-family:'Liberation Mono',monospace;font-size:28px;color:#8f908a;letter-spacing:-0.03px;transform:scaleY(1.2);">12</div>
<div style="position:absolute;left:108px;top:182.2px;height:38px;line-height:38px;width:2000px;font-family:'Liberation Mono',monospace;font-size:28px;color:#f8f8f2;white-space:pre;transform:scaleY(1.2);-webkit-text-stroke-width:0.35px;"><span style="position:absolute;left:0.00px;letter-spacing:-0.03px">USERNAME</span><span style="position:absolute;left:134.16px;width:16.77px;text-align:center;color:#5c5c55">·</span><span style="position:absolute;left:150.93px;letter-spacing:-0.03px">=</span><span style="position:absolute;left:167.70px;width:16.77px;text-align:center;color:#5c5c55">·</span><span style="position:absolute;left:184.47px;letter-spacing:-0.03px">username</span><span style="position:absolute;left:318.63px;color:#5c5c55">¤</span></div>
<div style="position:absolute;left:0px;width:75px;top:220.2px;height:38px;line-height:38px;text-align:right;font-family:'Liberation Mono',monospace;font-size:28px;color:#8f908a;letter-spacing:-0.03px;transform:scaleY(1.2);">13</div>
<div style="position:absolute;left:108px;top:220.2px;height:38px;line-height:38px;width:2000px;font-family:'Liberation Mono',monospace;font-size:28px;color:#f8f8f2;white-space:pre;transform:scaleY(1.2);-webkit-text-stroke-width:0.35px;"><span style="position:absolute;left:0.00px;letter-spacing:-0.03px">PASSWORD</span><span style="position:absolute;left:134.16px;width:16.77px;text-align:center;color:#5c5c55">·</span><span style="position:absolute;left:150.93px;letter-spacing:-0.03px">=</span><span style="position:absolute;left:167.70px;width:16.77px;text-align:center;color:#5c5c55">·</span><span style="position:absolute;left:184.47px;letter-spacing:-0.03px">password</span><span style="position:absolute;left:318.63px;color:#5c5c55">¤</span></div>
<div style="position:absolute;left:0px;width:75px;top:258.2px;height:38px;line-height:38px;text-align:right;font-family:'Liberation Mono',monospace;font-size:28px;color:#8f908a;letter-spacing:-0.03px;transform:scaleY(1.2);">14</div>
<div style="position:absolute;left:108px;top:258.2px;height:38px;line-height:38px;width:2000px;font-family:'Liberation Mono',monospace;font-size:28px;color:#f8f8f2;white-space:pre;transform:scaleY(1.2);-webkit-text-stroke-width:0.35px;"><span style="position:absolute;left:0.00px;letter-spacing:-0.03px">HOSTPORT</span><span style="position:absolute;left:134.16px;width:16.77px;text-align:center;color:#5c5c55">·</span><span style="position:absolute;left:150.93px;letter-spacing:-0.03px">=</span><span style="position:absolute;left:167.70px;width:16.77px;text-align:center;color:#5c5c55">·</span><span style="position:absolute;left:184.47px;letter-spacing:-0.03px">3306</span><span style="position:absolute;left:251.55px;color:#5c5c55">¤</span></div>
<div style="position:absolute;left:0px;width:75px;top:296.2px;height:38px;line-height:38px;text-align:right;font-family:'Liberation Mono',monospace;font-size:28px;color:#8f908a;letter-spacing:-0.03px;transform:scaleY(1.2);">15</div>
<div style="position:absolute;left:108px;top:296.2px;height:38px;line-height:38px;width:2000px;font-family:'Liberation Mono',monospace;font-size:28px;color:#f8f8f2;white-space:pre;transform:scaleY(1.2);-webkit-text-stroke-width:0.35px;"><span style="position:absolute;left:0.00px;letter-spacing:-0.03px">CHARSET</span><span style="position:absolute;left:117.39px;width:16.77px;text-align:center;color:#5c5c55">·</span><span style="position:absolute;left:134.16px;letter-spacing:-0.03px">=</span><span style="position:absolute;left:150.93px;width:16.77px;text-align:center;color:#5c5c55">·</span><span style="position:absolute;left:167.70px;letter-spacing:-0.03px">utf8mb4</span><span style="position:absolute;left:285.09px;color:#5c5c55">¤</span></div>
<div style="position:absolute;left:0px;width:75px;top:334.2px;height:38px;line-height:38px;text-align:right;font-family:'Liberation Mono',monospace;font-size:28px;color:#8f908a;letter-spacing:-0.03px;transform:scaleY(1.2);">16</div>
<div style="position:absolute;left:108px;top:334.2px;height:38px;line-height:38px;width:2000px;font-family:'Liberation Mono',monospace;font-size:28px;color:#f8f8f2;white-space:pre;transform:scaleY(1.2);-webkit-text-stroke-width:0.35px;"><span style="position:absolute;left:0.00px;letter-spacing:-0.03px">DEBUG</span><span style="position:absolute;left:83.85px;width:16.77px;text-align:center;color:#5c5c55">·</span><span style="position:absolute;left:100.62px;letter-spacing:-0.03px">=</span><span style="position:absolute;left:117.39px;width:16.77px;text-align:center;color:#5c5c55">·</span><span style="position:absolute;left:134.16px;letter-spacing:-0.03px">false</span><span style="position:absolute;left:218.01px;color:#5c5c55">¤</span></div>
<div style="position:absolute;left:0px;width:75px;top:372.2px;height:38px;line-height:38px;text-align:right;font-family:'Liberation Mono',monospace;font-size:28px;color:#8f908a;letter-spacing:-0.03px;transform:scaleY(1.2);">17</div>
<div style="position:absolute;left:108px;top:372.2px;height:38px;line-height:38px;width:2000px;font-family:'Liberation Mono',monospace;font-size:28px;color:#f8f8f2;white-space:pre;transform:scaleY(1.2);-webkit-text-stroke-width:0.35px;"><span style="position:absolute;left:0.00px;letter-spacing:-0.03px">PREFIX</span><span style="position:absolute;left:100.62px;width:16.77px;text-align:center;color:#5c5c55">·</span><span style="position:absolute;left:117.39px;letter-spacing:-0.03px">=</span><span style="position:absolute;left:134.16px;width:16.77px;text-align:center;color:#5c5c55">·</span><span style="position:absolute;left:150.93px;letter-spacing:-0.03px">la_</span><span style="position:absolute;left:201.24px;color:#5c5c55">¤</span></div>
<div style="position:absolute;left:0px;width:75px;top:410.2px;height:38px;line-height:38px;text-align:right;font-family:'Liberation Mono',monospace;font-size:28px;color:#8f908a;letter-spacing:-0.03px;transform:scaleY(1.2);">18</div>
<div style="position:absolute;left:108px;top:410.2px;height:38px;line-height:38px;width:2000px;font-family:'Liberation Mono',monospace;font-size:28px;color:#f8f8f2;white-space:pre;transform:scaleY(1.2);-webkit-text-stroke-width:0.35px;"><span style="position:absolute;left:0.00px;color:#5c5c55">¤</span></div>
<div style="position:absolute;left:0px;width:75px;top:448.2px;height:38px;line-height:38px;text-align:right;font-family:'Liberation Mono',monospace;font-size:28px;color:#8f908a;letter-spacing:-0.03px;transform:scaleY(1.2);">19</div>
<div style="position:absolute;left:108px;top:448.2px;height:38px;line-height:38px;width:2000px;font-family:'Liberation Mono',monospace;font-size:28px;color:#f8f8f2;white-space:pre;transform:scaleY(1.2);-webkit-text-stroke-width:0.35px;"><span style="position:absolute;left:0.00px;letter-spacing:-0.03px">[REDIS]</span><span style="position:absolute;left:117.39px;color:#5c5c55">¤</span></div>
<div style="position:absolute;left:0px;width:75px;top:486.2px;height:38px;line-height:38px;text-align:right;font-family:'Liberation Mono',monospace;font-size:28px;color:#8f908a;letter-spacing:-0.03px;transform:scaleY(1.2);">20</div>
<div style="position:absolute;left:108px;top:486.2px;height:38px;line-height:38px;width:2000px;font-family:'Liberation Mono',monospace;font-size:28px;color:#f8f8f2;white-space:pre;transform:scaleY(1.2);-webkit-text-stroke-width:0.35px;"><span style="position:absolute;left:0.00px;letter-spacing:-0.03px">#redis</span><span style="position:absolute;left:100.62px;width:33.54px;text-align:center;font-size:27px">队</span><span style="position:absolute;left:134.16px;width:33.54px;text-align:center;font-size:27px">列</span><span style="position:absolute;left:167.70px;width:33.54px;text-align:center;font-size:27px">使</span><span style="position:absolute;left:201.24px;width:33.54px;text-align:center;font-size:27px">用</span><span style="position:absolute;left:234.78px;color:#5c5c55">¤</span></div>
<div style="position:absolute;left:0px;width:75px;top:524.2px;height:38px;line-height:38px;text-align:right;font-family:'Liberation Mono',monospace;font-size:28px;color:#8f908a;letter-spacing:-0.03px;transform:scaleY(1.2);">21</div>
<div style="position:absolute;left:108px;top:524.2px;height:38px;line-height:38px;width:2000px;font-family:'Liberation Mono',monospace;font-size:28px;color:#f8f8f2;white-space:pre;transform:scaleY(1.2);-webkit-text-stroke-width:0.35px;"><span style="position:absolute;left:0.00px;letter-spacing:-0.03px">HOST</span><span style="position:absolute;left:67.08px;width:16.77px;text-align:center;color:#5c5c55">·</span><span style="position:absolute;left:83.85px;letter-spacing:-0.03px">=</span><span style="position:absolute;left:100.62px;width:16.77px;text-align:center;color:#5c5c55">·</span><span style="position:absolute;left:117.39px;letter-spacing:-0.03px">127.0.0.1</span><span style="position:absolute;left:268.32px;color:#5c5c55">¤</span></div>
<div style="position:absolute;left:0px;width:75px;top:562.2px;height:38px;line-height:38px;text-align:right;font-family:'Liberation Mono',monospace;font-size:28px;color:#8f908a;letter-spacing:-0.03px;transform:scaleY(1.2);">22</div>
<div style="position:absolute;left:108px;top:562.2px;height:38px;line-height:38px;width:2000px;font-family:'Liberation Mono',monospace;font-size:28px;color:#f8f8f2;white-space:pre;transform:scaleY(1.2);-webkit-text-stroke-width:0.35px;"><span style="position:absolute;left:0.00px;letter-spacing:-0.03px">PORT</span><span style="position:absolute;left:67.08px;width:16.77px;text-align:center;color:#5c5c55">·</span><span style="position:absolute;left:83.85px;letter-spacing:-0.03px">=</span><span style="position:absolute;left:100.62px;width:16.77px;text-align:center;color:#5c5c55">·</span><span style="position:absolute;left:117.39px;letter-spacing:-0.03px">6379</span><span style="position:absolute;left:184.47px;color:#5c5c55">¤</span></div>
<div style="position:absolute;left:0px;width:75px;top:600.2px;height:38px;line-height:38px;text-align:right;font-family:'Liberation Mono',monospace;font-size:28px;color:#8f908a;letter-spacing:-0.03px;transform:scaleY(1.2);">23</div>
<div style="position:absolute;left:108px;top:600.2px;height:38px;line-height:38px;width:2000px;font-family:'Liberation Mono',monospace;font-size:28px;color:#f8f8f2;white-space:pre;transform:scaleY(1.2);-webkit-text-stroke-width:0.35px;"><span style="position:absolute;left:0.00px;letter-spacing:-0.03px">PASSWORD</span><span style="position:absolute;left:134.16px;width:16.77px;text-align:center;color:#5c5c55">·</span><span style="position:absolute;left:150.93px;letter-spacing:-0.03px">=</span><span style="position:absolute;left:167.70px;width:16.77px;text-align:center;color:#5c5c55">·</span><span style="position:absolute;left:184.47px;letter-spacing:-0.03px">&quot;&quot;</span><span style="position:absolute;left:218.01px;color:#5c5c55">¤</span></div>
<div style="position:absolute;left:0px;width:75px;top:638.2px;height:38px;line-height:38px;text-align:right;font-family:'Liberation Mono',monospace;font-size:28px;color:#8f908a;letter-spacing:-0.03px;transform:scaleY(1.2);">24</div>
<div style="position:absolute;left:108px;top:638.2px;height:38px;line-height:38px;width:2000px;font-family:'Liberation Mono',monospace;font-size:28px;color:#f8f8f2;white-space:pre;transform:scaleY(1.2);-webkit-text-stroke-width:0.35px;"><span style="position:absolute;left:0.00px;letter-spacing:-0.03px">PREFIX</span><span style="position:absolute;left:100.62px;width:16.77px;text-align:center;color:#5c5c55">·</span><span style="position:absolute;left:117.39px;letter-spacing:-0.03px">=</span><span style="position:absolute;left:134.16px;width:16.77px;text-align:center;color:#5c5c55">·</span><span style="position:absolute;left:150.93px;letter-spacing:-0.03px">la_</span><span style="position:absolute;left:201.24px;width:16.77px;text-align:center;color:#5c5c55">·</span><span style="position:absolute;left:218.01px;width:16.77px;text-align:center;color:#5c5c55">·</span><span style="position:absolute;left:234.78px;width:16.77px;text-align:center;color:#5c5c55">·</span><span style="position:absolute;left:251.55px;width:16.77px;text-align:center;color:#5c5c55">·</span><span style="position:absolute;left:268.32px;width:16.77px;text-align:center;color:#5c5c55">·</span><span style="position:absolute;left:285.09px;width:16.77px;text-align:center;color:#5c5c55">·</span><span style="position:absolute;left:301.86px;width:16.77px;text-align:center;color:#5c5c55">·</span><span style="position:absolute;left:318.63px;width:16.77px;text-align:center;color:#5c5c55">·</span><span style="position:absolute;left:335.40px;width:16.77px;text-align:center;color:#5c5c55">·</span><span style="position:absolute;left:352.17px;width:16.77px;text-align:center;color:#5c5c55">·</span><span style="position:absolute;left:368.94px;width:16.77px;text-align:center;color:#5c5c55">·</span><span style="position:absolute;left:385.71px;width:16.77px;text-align:center;color:#5c5c55">·</span><span style="position:absolute;left:402.48px;width:16.77px;text-align:center;color:#5c5c55">·</span><span style="position:absolute;left:419.25px;width:16.77px;text-align:center;color:#5c5c55">·</span><span style="position:absolute;left:436.02px;width:16.77px;text-align:center;color:#5c5c55">·</span><span style="position:absolute;left:452.79px;width:16.77px;text-align:center;color:#5c5c55">·</span><span style="position:absolute;left:469.56px;width:16.77px;text-align:center;color:#5c5c55">·</span><span style="position:absolute;left:486.33px;width:16.77px;text-align:center;color:#5c5c55">·</span><span style="position:absolute;left:503.10px;width:16.77px;text-align:center;color:#5c5c55">·</span><span style="position:absolute;left:519.87px;width:16.77px;text-align:center;color:#5c5c55">·</span><span style="position:absolute;left:536.64px;width:16.77px;text-align:center;color:#5c5c55">·</span><span style="position:absolute;left:553.41px;width:16.77px;text-align:center;color:#5c5c55">·</span><span style="position:absolute;left:570.18px;width:16.77px;text-align:center;color:#5c5c55">·</span><span style="position:absolute;left:586.95px;width:16.77px;text-align:center;color:#5c5c55">·</span><span style="position:absolute;left:603.72px;width:16.77px;text-align:center;color:#5c5c55">·</span><span style="position:absolute;left:620.49px;width:16.77px;text-align:center;color:#5c5c55">·</span><span style="position:absolute;left:637.26px;width:16.77px;text-align:center;color:#5c5c55">·</span><span style="position:absolute;left:654.03px;width:16.77px;text-align:center;color:#5c5c55">·</span><span style="position:absolute;left:670.80px;width:16.77px;text-align:center;color:#5c5c55">·</span><span style="position:absolute;left:687.57px;width:16.77px;text-align:center;color:#5c5c55">·</span><span style="position:absolute;left:704.34px;width:16.77px;text-align:center;color:#5c5c55">·</span><span style="position:absolute;left:721.11px;width:16.77px;text-align:center;color:#5c5c55">·</span><span style="position:absolute;left:737.88px;color:#5c5c55">¤</span></div>
<div style="position:absolute;left:0px;width:75px;top:676.2px;height:38px;line-height:38px;text-align:right;font-family:'Liberation Mono',monospace;font-size:28px;color:#8f908a;letter-spacing:-0.03px;transform:scaleY(1.2);">25</div>
<div style="position:absolute;left:108px;top:676.2px;height:38px;line-height:38px;width:2000px;font-family:'Liberation Mono',monospace;font-size:28px;color:#f8f8f2;white-space:pre;transform:scaleY(1.2);-webkit-text-stroke-width:0.35px;"><span style="position:absolute;left:0.00px;letter-spacing:-0.03px">SELECT</span><span style="position:absolute;left:100.62px;width:16.77px;text-align:center;color:#5c5c55">·</span><span style="position:absolute;left:117.39px;letter-spacing:-0.03px">=</span><span style="position:absolute;left:134.16px;width:16.77px;text-align:center;color:#5c5c55">·</span><span style="position:absolute;left:150.93px;letter-spacing:-0.03px">9</span><span style="position:absolute;left:167.70px;color:#5c5c55">¤</span></div>
<div style="position:absolute;left:0px;width:75px;top:714.2px;height:38px;line-height:38px;text-align:right;font-family:'Liberation Mono',monospace;font-size:28px;color:#8f908a;letter-spacing:-0.03px;transform:scaleY(1.2);">26</div>
<div style="position:absolute;left:108px;top:714.2px;height:38px;line-height:38px;width:2000px;font-family:'Liberation Mono',monospace;font-size:28px;color:#f8f8f2;white-space:pre;transform:scaleY(1.2);-webkit-text-stroke-width:0.35px;"><span style="position:absolute;left:0.00px;letter-spacing:-0.03px">WS_SELECT</span><span style="position:absolute;left:150.93px;width:16.77px;text-align:center;color:#5c5c55">·</span><span style="position:absolute;left:167.70px;letter-spacing:-0.03px">=</span><span style="position:absolute;left:184.47px;width:16.77px;text-align:center;color:#5c5c55">·</span><span style="position:absolute;left:201.24px;letter-spacing:-0.03px">8</span><span style="position:absolute;left:218.01px;color:#5c5c55">¤</span></div>
<div style="position:absolute;left:0px;width:75px;top:752.2px;height:38px;line-height:38px;text-align:right;font-family:'Liberation Mono',monospace;font-size:28px;color:#8f908a;letter-spacing:-0.03px;transform:scaleY(1.2);">27</div>
<div style="position:absolute;left:108px;top:752.2px;height:38px;line-height:38px;width:2000px;font-family:'Liberation Mono',monospace;font-size:28px;color:#f8f8f2;white-space:pre;transform:scaleY(1.2);-webkit-text-stroke-width:0.35px;"><span style="position:absolute;left:0.00px;letter-spacing:-0.03px">WX_SELECT</span><span style="position:absolute;left:150.93px;width:16.77px;text-align:center;color:#5c5c55">·</span><span style="position:absolute;left:167.70px;letter-spacing:-0.03px">=</span><span style="position:absolute;left:184.47px;width:16.77px;text-align:center;color:#5c5c55">·</span><span style="position:absolute;left:201.24px;letter-spacing:-0.03px">10</span><span style="position:absolute;left:234.78px;color:#5c5c55">¤</span></div>
<div style="position:absolute;left:0px;width:75px;top:790.2px;height:38px;line-height:38px;text-align:right;font-family:'Liberation Mono',monospace;font-size:28px;color:#8f908a;letter-spacing:-0.03px;transform:scaleY(1.2);">28</div>
<div style="position:absolute;left:108px;top:790.2px;height:38px;line-height:38px;width:2000px;font-family:'Liberation Mono',monospace;font-size:28px;color:#f8f8f2;white-space:pre;transform:scaleY(1.2);-webkit-text-stroke-width:0.35px;"><span style="position:absolute;left:0.00px;color:#5c5c55">¤</span></div>
<div style="position:absolute;left:0px;width:75px;top:828.2px;height:38px;line-height:38px;text-align:right;font-family:'Liberation Mono',monospace;font-size:28px;color:#8f908a;letter-spacing:-0.03px;transform:scaleY(1.2);">29</div>
<div style="position:absolute;left:108px;top:828.2px;height:38px;line-height:38px;width:2000px;font-family:'Liberation Mono',monospace;font-size:28px;color:#f8f8f2;white-space:pre;transform:scaleY(1.2);-webkit-text-stroke-width:0.35px;"><span style="position:absolute;left:0.00px;letter-spacing:-0.03px">[CACHE]</span><span style="position:absolute;left:117.39px;color:#5c5c55">¤</span></div>
<div style="position:absolute;left:0px;width:75px;top:866.2px;height:38px;line-height:38px;text-align:right;font-family:'Liberation Mono',monospace;font-size:28px;color:#8f908a;letter-spacing:-0.03px;transform:scaleY(1.2);">30</div>
<div style="position:absolute;left:108px;top:866.2px;height:38px;line-height:38px;width:2000px;font-family:'Liberation Mono',monospace;font-size:28px;color:#f8f8f2;white-space:pre;transform:scaleY(1.2);-webkit-text-stroke-width:0.35px;"><span style="position:absolute;left:0.00px;letter-spacing:-0.03px">HOST</span><span style="position:absolute;left:67.08px;width:16.77px;text-align:center;color:#5c5c55">·</span><span style="position:absolute;left:83.85px;letter-spacing:-0.03px">=</span><span style="position:absolute;left:100.62px;width:16.77px;text-align:center;color:#5c5c55">·</span><span style="position:absolute;left:117.39px;letter-spacing:-0.03px">&quot;127.0.0.1&quot;</span><span style="position:absolute;left:301.86px;color:#5c5c55">¤</span></div>
<div style="position:absolute;left:0px;width:75px;top:904.2px;height:38px;line-height:38px;text-align:right;font-family:'Liberation Mono',monospace;font-size:28px;color:#8f908a;letter-spacing:-0.03px;transform:scaleY(1.2);">31</div>
<div style="position:absolute;left:108px;top:904.2px;height:38px;line-height:38px;width:2000px;font-family:'Liberation Mono',monospace;font-size:28px;color:#f8f8f2;white-space:pre;transform:scaleY(1.2);-webkit-text-stroke-width:0.35px;"><span style="position:absolute;left:0.00px;letter-spacing:-0.03px">PORT</span><span style="position:absolute;left:67.08px;width:16.77px;text-align:center;color:#5c5c55">·</span><span style="position:absolute;left:83.85px;letter-spacing:-0.03px">=</span><span style="position:absolute;left:100.62px;width:16.77px;text-align:center;color:#5c5c55">·</span><span style="position:absolute;left:117.39px;letter-spacing:-0.03px">&quot;6379&quot;</span><span style="position:absolute;left:218.01px;color:#5c5c55">¤</span></div>
<div style="position:absolute;left:0px;width:75px;top:942.2px;height:38px;line-height:38px;text-align:right;font-family:'Liberation Mono',monospace;font-size:28px;color:#8f908a;letter-spacing:-0.03px;transform:scaleY(1.2);">32</div>
<div style="position:absolute;left:108px;top:942.2px;height:38px;line-height:38px;width:2000px;font-family:'Liberation Mono',monospace;font-size:28px;color:#f8f8f2;white-space:pre;transform:scaleY(1.2);-webkit-text-stroke-width:0.35px;"><span style="position:absolute;left:0.00px;letter-spacing:-0.03px">PASSWORD</span><span style="position:absolute;left:134.16px;width:16.77px;text-align:center;color:#5c5c55">·</span><span style="position:absolute;left:150.93px;letter-spacing:-0.03px">=</span><span style="position:absolute;left:167.70px;width:16.77px;text-align:center;color:#5c5c55">·</span><span style="position:absolute;left:184.47px;letter-spacing:-0.03px">&quot;cs2024&quot;</span><span style="position:absolute;left:318.63px;color:#5c5c55">¤</span></div>
<div style="position:absolute;left:0px;width:75px;top:980.2px;height:38px;line-height:38px;text-align:right;font-family:'Liberation Mono',monospace;font-size:28px;color:#8f908a;letter-spacing:-0.03px;transform:scaleY(1.2);">33</div>
<div style="position:absolute;left:108px;top:980.2px;height:38px;line-height:38px;width:2000px;font-family:'Liberation Mono',monospace;font-size:28px;color:#f8f8f2;white-space:pre;transform:scaleY(1.2);-webkit-text-stroke-width:0.35px;"><span style="position:absolute;left:0.00px;letter-spacing:-0.03px">SELECT</span><span style="position:absolute;left:100.62px;width:16.77px;text-align:center;color:#5c5c55">·</span><span style="position:absolute;left:117.39px;letter-spacing:-0.03px">=</span><span style="position:absolute;left:134.16px;width:16.77px;text-align:center;color:#5c5c55">·</span><span style="position:absolute;left:150.93px;letter-spacing:-0.03px">8</span><span style="position:absolute;left:167.70px;color:#5c5c55">¤</span></div>
<div style="position:absolute;left:0px;width:75px;top:1018.2px;height:38px;line-height:38px;text-align:right;font-family:'Liberation Mono',monospace;font-size:28px;color:#8f908a;letter-spacing:-0.03px;transform:scaleY(1.2);">34</div>
<div style="position:absolute;left:108px;top:1018.2px;height:38px;line-height:38px;width:2000px;font-family:'Liberation Mono',monospace;font-size:28px;color:#f8f8f2;white-space:pre;transform:scaleY(1.2);-webkit-text-stroke-width:0.35px;"><span style="position:absolute;left:0.00px;letter-spacing:-0.03px">PREFIX</span><span style="position:absolute;left:100.62px;width:16.77px;text-align:center;color:#5c5c55">·</span><span style="position:absolute;left:117.39px;letter-spacing:-0.03px">=</span><span style="position:absolute;left:134.16px;width:16.77px;text-align:center;color:#5c5c55">·</span><span style="position:absolute;left:150.93px;letter-spacing:-0.03px">&quot;&quot;</span><span style="position:absolute;left:184.47px;color:#5c5c55">¤</span></div>
<div style="position:absolute;left:0px;width:75px;top:1056.2px;height:38px;line-height:38px;text-align:right;font-family:'Liberation Mono',monospace;font-size:28px;color:#8f908a;letter-spacing:-0.03px;transform:scaleY(1.2);">35</div>
<div style="position:absolute;left:108px;top:1056.2px;height:38px;line-height:38px;width:2000px;font-family:'Liberation Mono',monospace;font-size:28px;color:#f8f8f2;white-space:pre;transform:scaleY(1.2);-webkit-text-stroke-width:0.35px;"><span style="position:absolute;left:0.00px;color:#5c5c55">¤</span></div>
<div style="position:absolute;left:0px;width:75px;top:1094.2px;height:38px;line-height:38px;text-align:right;font-family:'Liberation Mono',monospace;font-size:28px;color:#8f908a;letter-spacing:-0.03px;transform:scaleY(1.2);">36</div>
<div style="position:absolute;left:108px;top:1094.2px;height:38px;line-height:38px;width:2000px;font-family:'Liberation Mono',monospace;font-size:28px;color:#f8f8f2;white-space:pre;transform:scaleY(1.2);-webkit-text-stroke-width:0.35px;"><span style="position:absolute;left:0.00px;letter-spacing:-0.03px">[LANG]</span><span style="position:absolute;left:100.62px;color:#5c5c55">¤</span></div>
<div style="position:absolute;left:0px;width:75px;top:1132.2px;height:38px;line-height:38px;text-align:right;font-family:'Liberation Mono',monospace;font-size:28px;color:#8f908a;letter-spacing:-0.03px;transform:scaleY(1.2);">37</div>
<div style="position:absolute;left:108px;top:1132.2px;height:38px;line-height:38px;width:2000px;font-family:'Liberation Mono',monospace;font-size:28px;color:#f8f8f2;white-space:pre;transform:scaleY(1.2);-webkit-text-stroke-width:0.35px;"><span style="position:absolute;left:0.00px;letter-spacing:-0.03px">default_lang</span><span style="position:absolute;left:201.24px;width:16.77px;text-align:center;color:#5c5c55">·</span><span style="position:absolute;left:218.01px;letter-spacing:-0.03px">=</span><span style="position:absolute;left:234.78px;width:16.77px;text-align:center;color:#5c5c55">·</span><span style="position:absolute;left:251.55px;letter-spacing:-0.03px">zh-cn</span><span style="position:absolute;left:335.40px;color:#5c5c55">¤</span></div>
<div style="position:absolute;left:0px;width:75px;top:1170.2px;height:38px;line-height:38px;text-align:right;font-family:'Liberation Mono',monospace;font-size:28px;color:#8f908a;letter-spacing:-0.03px;transform:scaleY(1.2);">38</div>
<div style="position:absolute;left:108px;top:1170.2px;height:38px;line-height:38px;width:2000px;font-family:'Liberation Mono',monospace;font-size:28px;color:#f8f8f2;white-space:pre;transform:scaleY(1.2);-webkit-text-stroke-width:0.35px;"><span style="position:absolute;left:0.00px;color:#5c5c55">¤</span></div>
<div style="position:absolute;left:0px;width:75px;top:1208.2px;height:38px;line-height:38px;text-align:right;font-family:'Liberation Mono',monospace;font-size:28px;color:#8f908a;letter-spacing:-0.03px;transform:scaleY(1.2);">39</div>
<div style="position:absolute;left:108px;top:1208.2px;height:38px;line-height:38px;width:2000px;font-family:'Liberation Mono',monospace;font-size:28px;color:#f8f8f2;white-space:pre;transform:scaleY(1.2);-webkit-text-stroke-width:0.35px;"><span style="position:absolute;left:0.00px;letter-spacing:-0.03px">[PROJECT]</span><span style="position:absolute;left:150.93px;color:#5c5c55">¤</span></div>
<div style="position:absolute;left:0px;width:75px;top:1246.2px;height:38px;line-height:38px;text-align:right;font-family:'Liberation Mono',monospace;font-size:28px;color:#8f908a;letter-spacing:-0.03px;transform:scaleY(1.2);">40</div>
<div style="position:absolute;left:108px;top:1246.2px;height:38px;line-height:38px;width:2000px;font-family:'Liberation Mono',monospace;font-size:28px;color:#f8f8f2;white-space:pre;transform:scaleY(1.2);-webkit-text-stroke-width:0.35px;"><span style="position:absolute;left:0.00px;letter-spacing:-0.03px">UNIQUE_IDENTIFICATION</span><span style="position:absolute;left:352.17px;width:16.77px;text-align:center;color:#5c5c55">·</span><span style="position:absolute;left:368.94px;letter-spacing:-0.03px">=</span><span style="position:absolute;left:385.71px;width:16.77px;text-align:center;color:#5c5c55">·</span><span style="position:absolute;left:402.48px;letter-spacing:-0.03px">imai.work</span><span style="position:absolute;left:553.41px;color:#5c5c55">¤</span></div>
<div style="position:absolute;left:0px;width:75px;top:1284.2px;height:38px;line-height:38px;text-align:right;font-family:'Liberation Mono',monospace;font-size:28px;color:#8f908a;letter-spacing:-0.03px;transform:scaleY(1.2);">41</div>
<div style="position:absolute;left:108px;top:1284.2px;height:38px;line-height:38px;width:2000px;font-family:'Liberation Mono',monospace;font-size:28px;color:#f8f8f2;white-space:pre;transform:scaleY(1.2);-webkit-text-stroke-width:0.35px;"><span style="position:absolute;left:0.00px;letter-spacing:-0.03px">#</span><span style="position:absolute;left:16.77px;width:16.77px;text-align:center;color:#5c5c55">·</span><span style="position:absolute;left:33.54px;width:33.54px;text-align:center;font-size:27px">演</span><span style="position:absolute;left:67.08px;width:33.54px;text-align:center;font-size:27px">示</span><span style="position:absolute;left:100.62px;width:33.54px;text-align:center;font-size:27px">环</span><span style="position:absolute;left:134.16px;width:33.54px;text-align:center;font-size:27px">境</span><span style="position:absolute;left:167.70px;color:#5c5c55">¤</span></div>
<div style="position:absolute;left:0px;width:75px;top:1322.2px;height:38px;line-height:38px;text-align:right;font-family:'Liberation Mono',monospace;font-size:28px;color:#8f908a;letter-spacing:-0.03px;transform:scaleY(1.2);">42</div>
<div style="position:absolute;left:108px;top:1322.2px;height:38px;line-height:38px;width:2000px;font-family:'Liberation Mono',monospace;font-size:28px;color:#f8f8f2;white-space:pre;transform:scaleY(1.2);-webkit-text-stroke-width:0.35px;"><span style="position:absolute;left:0.00px;letter-spacing:-0.03px">DEMO_ENV</span><span style="position:absolute;left:134.16px;width:16.77px;text-align:center;color:#5c5c55">·</span><span style="position:absolute;left:150.93px;letter-spacing:-0.03px">=</span><span style="position:absolute;left:167.70px;width:16.77px;text-align:center;color:#5c5c55">·</span><span style="position:absolute;left:184.47px;letter-spacing:-0.03px">false</span><span style="position:absolute;left:268.32px;color:#5c5c55">¤</span></div>
<div style="position:absolute;left:0px;width:75px;top:1360.2px;height:38px;line-height:38px;text-align:right;font-family:'Liberation Mono',monospace;font-size:28px;color:#8f908a;letter-spacing:-0.03px;transform:scaleY(1.2);">43</div>
<div style="position:absolute;left:108px;top:1360.2px;height:38px;line-height:38px;width:2000px;font-family:'Liberation Mono',monospace;font-size:28px;color:#f8f8f2;white-space:pre;transform:scaleY(1.2);-webkit-text-stroke-width:0.35px;"><span style="position:absolute;left:0.00px;color:#5c5c55">¤</span></div>
<div style="position:absolute;left:0px;width:75px;top:1398.2px;height:38px;line-height:38px;text-align:right;font-family:'Liberation Mono',monospace;font-size:28px;color:#8f908a;letter-spacing:-0.03px;transform:scaleY(1.2);">44</div>
<div style="position:absolute;left:108px;top:1398.2px;height:38px;line-height:38px;width:2000px;font-family:'Liberation Mono',monospace;font-size:28px;color:#f8f8f2;white-space:pre;transform:scaleY(1.2);-webkit-text-stroke-width:0.35px;"><span style="position:absolute;left:0.00px;letter-spacing:-0.03px">[IMAIWORK]</span><span style="position:absolute;left:167.70px;color:#5c5c55">¤</span></div>
<div style="position:absolute;left:0px;width:75px;top:1436.2px;height:38px;line-height:38px;text-align:right;font-family:'Liberation Mono',monospace;font-size:28px;color:#8f908a;letter-spacing:-0.03px;transform:scaleY(1.2);">45</div>
<div style="position:absolute;left:108px;top:1436.2px;height:38px;line-height:38px;width:2000px;font-family:'Liberation Mono',monospace;font-size:28px;color:#f8f8f2;white-space:pre;transform:scaleY(1.2);-webkit-text-stroke-width:0.35px;"><span style="position:absolute;left:0.00px;letter-spacing:-0.03px">#</span><span style="position:absolute;left:16.77px;width:16.77px;text-align:center;color:#5c5c55">·</span><span style="position:absolute;left:33.54px;letter-spacing:-0.03px">API</span><span style="position:absolute;left:83.85px;width:33.54px;text-align:center;font-size:27px">密</span><span style="position:absolute;left:117.39px;width:33.54px;text-align:center;font-size:27px">钥</span><span style="position:absolute;left:150.93px;width:16.77px;text-align:center;color:#5c5c55">·</span><span style="position:absolute;left:167.70px;letter-spacing:-0.03px">-</span><span style="position:absolute;left:184.47px;width:16.77px;text-align:center;color:#5c5c55">·</span><span style="position:absolute;left:201.24px;width:33.54px;text-align:center;font-size:27px">请</span><span style="position:absolute;left:234.78px;width:33.54px;text-align:center;font-size:27px">求</span><span style="position:absolute;left:268.32px;width:33.54px;text-align:center;font-size:27px">各</span><span style="position:absolute;left:301.86px;width:33.54px;text-align:center;font-size:27px">类</span><span style="position:absolute;left:335.40px;width:33.54px;text-align:center;font-size:27px">模</span><span style="position:absolute;left:368.94px;width:33.54px;text-align:center;font-size:27px">型</span><span style="position:absolute;left:402.48px;width:33.54px;text-align:center;font-size:27px">必</span><span style="position:absolute;left:436.02px;width:33.54px;text-align:center;font-size:27px">要</span><span style="position:absolute;left:469.56px;width:33.54px;text-align:center;font-size:27px">的</span><span style="position:absolute;left:503.10px;width:33.54px;text-align:center;font-size:27px">密</span><span style="position:absolute;left:536.64px;width:33.54px;text-align:center;font-size:27px">钥</span><span style="position:absolute;left:570.18px;width:16.77px;text-align:center;color:#5c5c55">·</span><span style="position:absolute;left:586.95px;width:16.77px;text-align:center;color:#5c5c55">·</span><span style="position:absolute;left:603.72px;width:33.54px;text-align:center;font-size:27px">不</span><span style="position:absolute;left:637.26px;width:33.54px;text-align:center;font-size:27px">要</span><span style="position:absolute;left:670.80px;width:33.54px;text-align:center;font-size:27px">泄</span><span style="position:absolute;left:704.34px;width:33.54px;text-align:center;font-size:27px">露</span><span style="position:absolute;left:737.88px;width:16.77px;text-align:center;color:#5c5c55">·</span><span style="position:absolute;left:754.65px;width:33.54px;text-align:center;font-size:27px">以</span><span style="position:absolute;left:788.19px;width:33.54px;text-align:center;font-size:27px">及</span><span style="position:absolute;left:821.73px;width:16.77px;text-align:center;color:#5c5c55">·</span><span style="position:absolute;left:838.50px;width:33.54px;text-align:center;font-size:27px">修</span><span style="position:absolute;left:872.04px;width:33.54px;text-align:center;font-size:27px">改</span><span style="position:absolute;left:905.58px;width:33.54px;text-align:center;font-size:27px">删</span><span style="position:absolute;left:939.12px;width:33.54px;text-align:center;font-size:27px">除</span><span style="position:absolute;left:972.66px;color:#5c5c55">¤</span></div>
<div style="position:absolute;left:0px;width:75px;top:1474.2px;height:38px;line-height:38px;text-align:right;font-family:'Liberation Mono',monospace;font-size:28px;color:#8f908a;letter-spacing:-0.03px;transform:scaleY(1.2);">46</div>
<div style="position:absolute;left:108px;top:1474.2px;height:38px;line-height:38px;width:2000px;font-family:'Liberation Mono',monospace;font-size:28px;color:#f8f8f2;white-space:pre;transform:scaleY(1.2);-webkit-text-stroke-width:0.35px;"><span style="position:absolute;left:0.00px;letter-spacing:-0.03px">API_KEY</span><span style="position:absolute;left:117.39px;width:16.77px;text-align:center;color:#5c5c55">·</span><span style="position:absolute;left:134.16px;letter-spacing:-0.03px">=</span><span style="position:absolute;left:150.93px;width:16.77px;text-align:center;color:#5c5c55">·</span><span style="position:absolute;left:167.70px;letter-spacing:-0.03px">&quot;&quot;</span><span style="position:absolute;left:201.24px;width:16.77px;text-align:center;color:#5c5c55">·</span><span style="position:absolute;left:218.01px;color:#5c5c55">¤</span></div>
<div style="position:absolute;left:0px;width:75px;top:1512.2px;height:38px;line-height:38px;text-align:right;font-family:'Liberation Mono',monospace;font-size:28px;color:#8f908a;letter-spacing:-0.03px;transform:scaleY(1.2);">47</div>
<div style="position:absolute;left:108px;top:1512.2px;height:38px;line-height:38px;width:2000px;font-family:'Liberation Mono',monospace;font-size:28px;color:#f8f8f2;white-space:pre;transform:scaleY(1.2);-webkit-text-stroke-width:0.35px;"><span style="position:absolute;left:0.00px;letter-spacing:-0.03px">#</span><span style="position:absolute;left:16.77px;width:16.77px;text-align:center;color:#5c5c55">·</span><span style="position:absolute;left:33.54px;width:33.54px;text-align:center;font-size:27px">签</span><span style="position:absolute;left:67.08px;width:33.54px;text-align:center;font-size:27px">名</span><span style="position:absolute;left:100.62px;width:33.54px;text-align:center;font-size:27px">密</span><span style="position:absolute;left:134.16px;width:33.54px;text-align:center;font-size:27px">钥</span><span style="position:absolute;left:167.70px;width:16.77px;text-align:center;color:#5c5c55">·</span><span style="position:absolute;left:184.47px;letter-spacing:-0.03px">-</span><span style="position:absolute;left:201.24px;width:16.77px;text-align:center;color:#5c5c55">·</span><span style="position:absolute;left:218.01px;width:33.54px;text-align:center;font-size:27px">用</span><span style="position:absolute;left:251.55px;width:33.54px;text-align:center;font-size:27px">于</span><span style="position:absolute;left:285.09px;width:33.54px;text-align:center;font-size:27px">请</span><span style="position:absolute;left:318.63px;width:33.54px;text-align:center;font-size:27px">求</span><span style="position:absolute;left:352.17px;width:33.54px;text-align:center;font-size:27px">中</span><span style="position:absolute;left:385.71px;width:33.54px;text-align:center;font-size:27px">对</span><span style="position:absolute;left:419.25px;width:33.54px;text-align:center;font-size:27px">参</span><span style="position:absolute;left:452.79px;width:33.54px;text-align:center;font-size:27px">数</span><span style="position:absolute;left:486.33px;width:33.54px;text-align:center;font-size:27px">的</span><span style="position:absolute;left:519.87px;width:33.54px;text-align:center;font-size:27px">校</span><span style="position:absolute;left:553.41px;width:33.54px;text-align:center;font-size:27px">验</span><span style="position:absolute;left:586.95px;width:16.77px;text-align:center;color:#5c5c55">·</span><span style="position:absolute;left:603.72px;width:16.77px;text-align:center;color:#5c5c55">·</span><span style="position:absolute;left:620.49px;width:33.54px;text-align:center;font-size:27px">不</span><span style="position:absolute;left:654.03px;width:33.54px;text-align:center;font-size:27px">要</span><span style="position:absolute;left:687.57px;width:33.54px;text-align:center;font-size:27px">泄</span><span style="position:absolute;left:721.11px;width:33.54px;text-align:center;font-size:27px">露</span><span style="position:absolute;left:754.65px;width:16.77px;text-align:center;color:#5c5c55">·</span><span style="position:absolute;left:771.42px;width:33.54px;text-align:center;font-size:27px">以</span><span style="position:absolute;left:804.96px;width:33.54px;text-align:center;font-size:27px">及</span><span style="position:absolute;left:838.50px;width:16.77px;text-align:center;color:#5c5c55">·</span><span style="position:absolute;left:855.27px;width:33.54px;text-align:center;font-size:27px">修</span><span style="position:absolute;left:888.81px;width:33.54px;text-align:center;font-size:27px">改</span><span style="position:absolute;left:922.35px;width:33.54px;text-align:center;font-size:27px">删</span><span style="position:absolute;left:955.89px;width:33.54px;text-align:center;font-size:27px">除</span><span style="position:absolute;left:989.43px;color:#5c5c55">¤</span></div>
<div style="position:absolute;left:0px;width:75px;top:1550.2px;height:38px;line-height:38px;text-align:right;font-family:'Liberation Mono',monospace;font-size:28px;color:#8f908a;letter-spacing:-0.03px;transform:scaleY(1.2);">48</div>
<div style="position:absolute;left:108px;top:1550.2px;height:38px;line-height:38px;width:2000px;font-family:'Liberation Mono',monospace;font-size:28px;color:#f8f8f2;white-space:pre;transform:scaleY(1.2);-webkit-text-stroke-width:0.35px;"><span style="position:absolute;left:0.00px;letter-spacing:-0.03px">SIGN_KEY</span><span style="position:absolute;left:134.16px;width:16.77px;text-align:center;color:#5c5c55">·</span><span style="position:absolute;left:150.93px;letter-spacing:-0.03px">=</span><span style="position:absolute;left:167.70px;width:16.77px;text-align:center;color:#5c5c55">·</span><span style="position:absolute;left:184.47px;letter-spacing:-0.03px">&quot;&quot;</span><span style="position:absolute;left:218.01px;color:#5c5c55">¤</span></div>
<div style="position:absolute;left:0px;width:75px;top:1588.2px;height:38px;line-height:38px;text-align:right;font-family:'Liberation Mono',monospace;font-size:28px;color:#8f908a;letter-spacing:-0.03px;transform:scaleY(1.2);">49</div>
<div style="position:absolute;left:108px;top:1588.2px;height:38px;line-height:38px;width:2000px;font-family:'Liberation Mono',monospace;font-size:28px;color:#f8f8f2;white-space:pre;transform:scaleY(1.2);-webkit-text-stroke-width:0.35px;"><span style="position:absolute;left:0px;color:#5c5c55">¶</span></div>
</div>
<div style="position:absolute;left:1106px;top:921px;width:953px;height:651px;border:4.5px solid #ff0000;"></div>
<div style="position:absolute;left:1022px;top:1147px;width:29px;height:100px;background:#202020;border:2px solid #555;border-left:none;border-radius:0 28px 28px 0;"></div>
<svg style="position:absolute;left:1026px;top:1181px;" width="22" height="32" viewBox="0 0 22 32"><path d="M18 2 L5 16 L18 30" fill="none" stroke="#fff" stroke-width="3.5"/></svg>
</body></html>
